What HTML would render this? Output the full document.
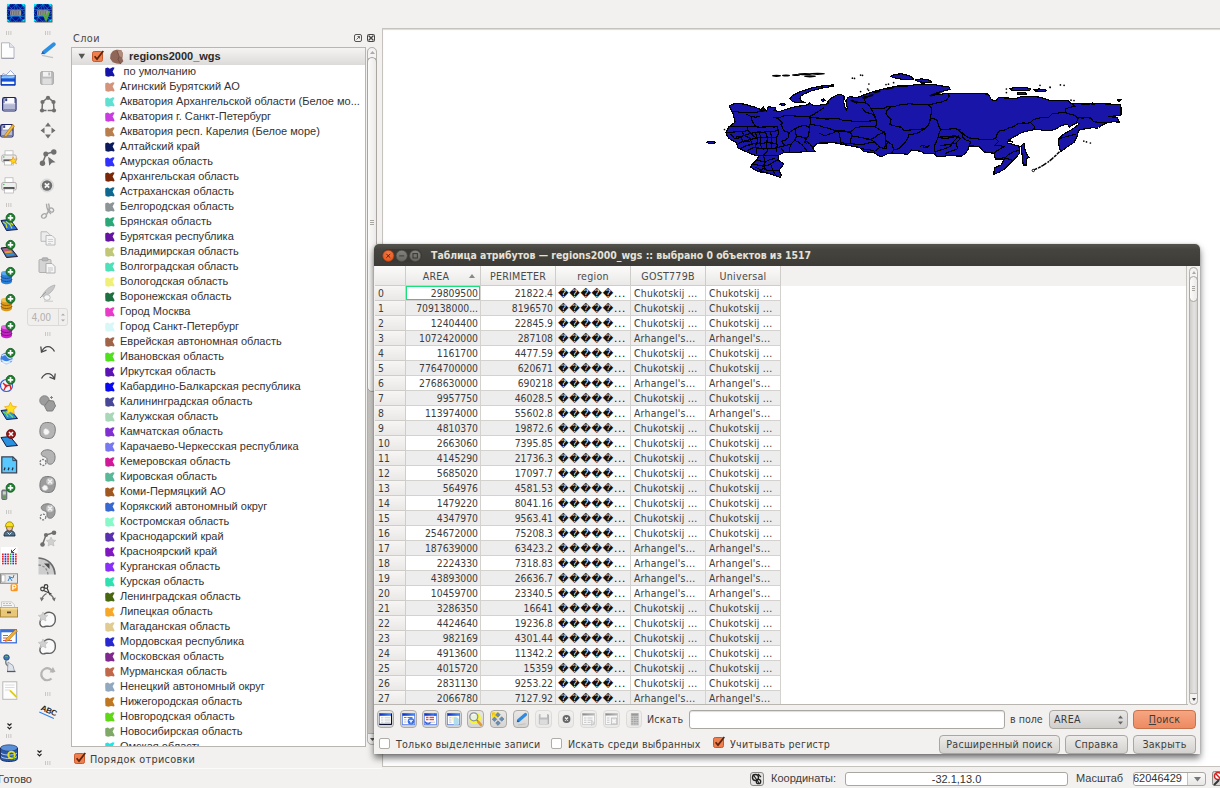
<!DOCTYPE html>
<html lang="ru"><head><meta charset="utf-8"><title>QGIS</title>
<style>
html,body{margin:0;padding:0;}
body{width:1220px;height:788px;overflow:hidden;position:relative;background:#f2f1f0;font-family:"Liberation Sans",sans-serif;font-size:11px;color:#3c3c3c;}
.a{position:absolute;}
.u{font-family:"DejaVu Sans Condensed","DejaVu Sans","Liberation Sans",sans-serif;font-size:10.600px;letter-spacing:0.220px;}
.t{position:absolute;white-space:nowrap;line-height:15px;height:15px;}
.sw{position:absolute;left:106px;width:10px;height:10px;}
.row{position:absolute;left:0;width:406px;height:15px;}
.c{position:absolute;top:0;height:14px;line-height:14px;border-right:1px solid #d4d2cf;border-bottom:1px solid #d4d2cf;white-space:nowrap;overflow:hidden;font-family:"DejaVu Sans Condensed","DejaVu Sans",sans-serif;font-size:10.300px;color:#3c3c3c;}
.r{text-align:right;}
.btn{position:absolute;border:1px solid #aaa6a0;border-radius:4px;background:linear-gradient(#edecea,#d3d2cf);text-align:center;font-family:"DejaVu Sans Condensed","DejaVu Sans",sans-serif;font-size:10.600px;letter-spacing:0.250px;color:#3c3c3c;box-sizing:border-box;}
.tb{position:absolute;width:16.500px;height:17.800px;border:1px solid #aeaba6;border-radius:4px;background:linear-gradient(#e9e8e6,#d5d4d2);box-sizing:border-box;overflow:hidden;}
.tbd{position:absolute;width:16.500px;height:17.800px;border:1px solid #dddbd8;border-radius:4px;background:linear-gradient(#f1f0ef,#eae9e7);box-sizing:border-box;overflow:hidden;}
.hd{position:absolute;width:6px;height:4px;background:repeating-linear-gradient(90deg,#c9c7c4 0,#c9c7c4 1px,transparent 1px,transparent 2.5px);}
.ic{position:absolute;overflow:visible;}
</style></head><body>
<div class="a" style="left:382px;top:28px;width:840px;height:739px;background:#fff;border:1px solid #c6c3be;box-sizing:border-box;box-shadow:inset 0 1px 1px #dcdad7;"></div>
<div class="t u" style="left:73px;top:31px;font-size:10.800px;letter-spacing:0.400px;color:#4a4a4a;">Слои</div>
<svg class="ic" style="left:354px;top:33.800px" width="24" height="10" viewBox="0 0 24 10"><rect x="0.5" y="0.5" width="7" height="7" rx="1.5" fill="none" stroke="#555" stroke-width="1"/><path d="M2.5 5.5L5.5 2.5M3.5 2.5h2v2" stroke="#555" stroke-width="0.9" fill="none"/><rect x="13.500" y="0.5" width="7" height="7" rx="1" fill="none" stroke="#444" stroke-width="1"/><path d="M14.5 1.500l5 5M19.500 1.500l-5 5" stroke="#444" stroke-width="1.300"/></svg>
<div class="a" style="left:71px;top:47px;width:295px;height:700px;background:#fff;border:1px solid #b9b6b1;box-sizing:border-box;overflow:hidden;">
<div class="a" style="left:0;top:0;width:293px;height:17px;background:linear-gradient(#f5f4f3,#dcdbd9);"></div>
<svg class="ic" style="left:6px;top:5px" width="8" height="7" viewBox="0 0 8 7"><path d="M0.500 0.800h6.500L3.750 6z" fill="#555"/></svg>
<svg class="ic" style="left:19.5px;top:2px" width="13" height="12" viewBox="0 0 13 12"><rect x="0.5" y="1.500" width="10" height="10" rx="1.800" fill="#f07f4e" stroke="#c8592b" stroke-width="1"/><path d="M2.600 6.300l2.400 2.800L11.300 1" fill="none" stroke="#5a2410" stroke-width="1.700"/></svg>
<svg class="ic" style="left:37px;top:0.500px" width="16" height="16" viewBox="0 0 15 15"><path d="M3 2.500C5 .5 9 .2 11.500 1.200L13 4 12.500 9 13.500 11.500 11 14 7 13.500 3.500 12.500 1 9 1.500 5z" fill="#8f6657"/><path d="M7.500 1.500L11.500 1.200 13 4 12.500 7.500 9.500 7z" fill="#b08a7a"/><path d="M7.500 1.500L9.500 7 8.500 10 11 14" fill="none" stroke="#6e4a3e" stroke-width="0.800"/></svg>
<div class="t" style="left:57px;top:1px;font-weight:bold;color:#2a2a2a;">regions2000_wgs</div>
<svg class="ic" style="left:33.300px;top:19px" width="10" height="10" viewBox="0 0 10 10"><path d="M0.300 1.200L2.800 0.600 4.800 1.700 7.800 0.200 9.600 0.700 7.600 4.500 9.600 8.300 9 9.600 6.200 9 3.200 9.700 0.500 9.100 0.200 5z" fill="#1414a8"/></svg><div class="t" style="left:51.5px;top:16.3px;color:#333;">по умолчанию</div>
<svg class="ic" style="left:33.300px;top:34px" width="10" height="10" viewBox="0 0 10 10"><path d="M0.300 1.200L2.800 0.600 4.800 1.700 7.800 0.200 9.600 0.700 7.600 4.500 9.600 8.300 9 9.600 6.200 9 3.200 9.700 0.500 9.100 0.200 5z" fill="#d4937a"/></svg><div class="t" style="left:48px;top:31.3px;color:#333;">Агинский Бурятский АО</div>
<svg class="ic" style="left:33.300px;top:49px" width="10" height="10" viewBox="0 0 10 10"><path d="M0.300 1.200L2.800 0.600 4.800 1.700 7.800 0.200 9.600 0.700 7.600 4.500 9.600 8.300 9 9.600 6.200 9 3.200 9.700 0.500 9.100 0.200 5z" fill="#5fe0d0"/></svg><div class="t" style="left:48px;top:46.3px;color:#333;">Акватория Архангельской области (Белое мо...</div>
<svg class="ic" style="left:33.300px;top:64px" width="10" height="10" viewBox="0 0 10 10"><path d="M0.300 1.200L2.800 0.600 4.800 1.700 7.800 0.200 9.600 0.700 7.600 4.500 9.600 8.300 9 9.600 6.200 9 3.200 9.700 0.500 9.100 0.200 5z" fill="#c83ce0"/></svg><div class="t" style="left:48px;top:61.3px;color:#333;">Акватория г. Санкт-Петербург</div>
<svg class="ic" style="left:33.300px;top:79px" width="10" height="10" viewBox="0 0 10 10"><path d="M0.300 1.200L2.800 0.600 4.800 1.700 7.800 0.200 9.600 0.700 7.600 4.500 9.600 8.300 9 9.600 6.200 9 3.200 9.700 0.500 9.100 0.200 5z" fill="#b97e4e"/></svg><div class="t" style="left:48px;top:76.3px;color:#333;">Акватория респ. Карелия (Белое море)</div>
<svg class="ic" style="left:33.300px;top:94px" width="10" height="10" viewBox="0 0 10 10"><path d="M0.300 1.200L2.800 0.600 4.800 1.700 7.800 0.200 9.600 0.700 7.600 4.500 9.600 8.300 9 9.600 6.200 9 3.200 9.700 0.500 9.100 0.200 5z" fill="#0a1a5c"/></svg><div class="t" style="left:48px;top:91.3px;color:#333;">Алтайский край</div>
<svg class="ic" style="left:33.300px;top:109px" width="10" height="10" viewBox="0 0 10 10"><path d="M0.300 1.200L2.800 0.600 4.800 1.700 7.800 0.200 9.600 0.700 7.600 4.500 9.600 8.300 9 9.600 6.200 9 3.200 9.700 0.500 9.100 0.200 5z" fill="#3030ff"/></svg><div class="t" style="left:48px;top:106.3px;color:#333;">Амурская область</div>
<svg class="ic" style="left:33.300px;top:124px" width="10" height="10" viewBox="0 0 10 10"><path d="M0.300 1.200L2.800 0.600 4.800 1.700 7.800 0.200 9.600 0.700 7.600 4.500 9.600 8.300 9 9.600 6.200 9 3.200 9.700 0.500 9.100 0.200 5z" fill="#7a2808"/></svg><div class="t" style="left:48px;top:121.3px;color:#333;">Архангельская область</div>
<svg class="ic" style="left:33.300px;top:139px" width="10" height="10" viewBox="0 0 10 10"><path d="M0.300 1.200L2.800 0.600 4.800 1.700 7.800 0.200 9.600 0.700 7.600 4.500 9.600 8.300 9 9.600 6.200 9 3.200 9.700 0.500 9.100 0.200 5z" fill="#0e6890"/></svg><div class="t" style="left:48px;top:136.3px;color:#333;">Астраханская область</div>
<svg class="ic" style="left:33.300px;top:154px" width="10" height="10" viewBox="0 0 10 10"><path d="M0.300 1.200L2.800 0.600 4.800 1.700 7.800 0.200 9.600 0.700 7.600 4.500 9.600 8.300 9 9.600 6.200 9 3.200 9.700 0.500 9.100 0.200 5z" fill="#8c9496"/></svg><div class="t" style="left:48px;top:151.3px;color:#333;">Белгородская область</div>
<svg class="ic" style="left:33.300px;top:169px" width="10" height="10" viewBox="0 0 10 10"><path d="M0.300 1.200L2.800 0.600 4.800 1.700 7.800 0.200 9.600 0.700 7.600 4.500 9.600 8.300 9 9.600 6.200 9 3.200 9.700 0.500 9.100 0.200 5z" fill="#2aa878"/></svg><div class="t" style="left:48px;top:166.3px;color:#333;">Брянская область</div>
<svg class="ic" style="left:33.300px;top:184px" width="10" height="10" viewBox="0 0 10 10"><path d="M0.300 1.200L2.800 0.600 4.800 1.700 7.800 0.200 9.600 0.700 7.600 4.500 9.600 8.300 9 9.600 6.200 9 3.200 9.700 0.500 9.100 0.200 5z" fill="#6414a0"/></svg><div class="t" style="left:48px;top:181.3px;color:#333;">Бурятская республика</div>
<svg class="ic" style="left:33.300px;top:199px" width="10" height="10" viewBox="0 0 10 10"><path d="M0.300 1.200L2.800 0.600 4.800 1.700 7.800 0.200 9.600 0.700 7.600 4.500 9.600 8.300 9 9.600 6.200 9 3.200 9.700 0.500 9.100 0.200 5z" fill="#c0c878"/></svg><div class="t" style="left:48px;top:196.3px;color:#333;">Владимирская область</div>
<svg class="ic" style="left:33.300px;top:214px" width="10" height="10" viewBox="0 0 10 10"><path d="M0.300 1.200L2.800 0.600 4.800 1.700 7.800 0.200 9.600 0.700 7.600 4.500 9.600 8.300 9 9.600 6.200 9 3.200 9.700 0.500 9.100 0.200 5z" fill="#50e0b8"/></svg><div class="t" style="left:48px;top:211.3px;color:#333;">Волгоградская область</div>
<svg class="ic" style="left:33.300px;top:229px" width="10" height="10" viewBox="0 0 10 10"><path d="M0.300 1.200L2.800 0.600 4.800 1.700 7.800 0.200 9.600 0.700 7.600 4.500 9.600 8.300 9 9.600 6.200 9 3.200 9.700 0.500 9.100 0.200 5z" fill="#f0f078"/></svg><div class="t" style="left:48px;top:226.3px;color:#333;">Вологодская область</div>
<svg class="ic" style="left:33.300px;top:244px" width="10" height="10" viewBox="0 0 10 10"><path d="M0.300 1.200L2.800 0.600 4.800 1.700 7.800 0.200 9.600 0.700 7.600 4.500 9.600 8.300 9 9.600 6.200 9 3.200 9.700 0.500 9.100 0.200 5z" fill="#1e7040"/></svg><div class="t" style="left:48px;top:241.3px;color:#333;">Воронежская область</div>
<svg class="ic" style="left:33.300px;top:259px" width="10" height="10" viewBox="0 0 10 10"><path d="M0.300 1.200L2.800 0.600 4.800 1.700 7.800 0.200 9.600 0.700 7.600 4.500 9.600 8.300 9 9.600 6.200 9 3.200 9.700 0.500 9.100 0.200 5z" fill="#e83cc8"/></svg><div class="t" style="left:48px;top:256.3px;color:#333;">Город Москва</div>
<svg class="ic" style="left:33.300px;top:274px" width="10" height="10" viewBox="0 0 10 10"><path d="M0.300 1.200L2.800 0.600 4.800 1.700 7.800 0.200 9.600 0.700 7.600 4.500 9.600 8.300 9 9.600 6.200 9 3.200 9.700 0.500 9.100 0.200 5z" fill="#d8f8f8"/></svg><div class="t" style="left:48px;top:271.3px;color:#333;">Город Санкт-Петербург</div>
<svg class="ic" style="left:33.300px;top:289px" width="10" height="10" viewBox="0 0 10 10"><path d="M0.300 1.200L2.800 0.600 4.800 1.700 7.800 0.200 9.600 0.700 7.600 4.500 9.600 8.300 9 9.600 6.200 9 3.200 9.700 0.500 9.100 0.200 5z" fill="#a06448"/></svg><div class="t" style="left:48px;top:286.3px;color:#333;">Еврейская автономная область</div>
<svg class="ic" style="left:33.300px;top:304px" width="10" height="10" viewBox="0 0 10 10"><path d="M0.300 1.200L2.800 0.600 4.800 1.700 7.800 0.200 9.600 0.700 7.600 4.500 9.600 8.300 9 9.600 6.200 9 3.200 9.700 0.500 9.100 0.200 5z" fill="#50e020"/></svg><div class="t" style="left:48px;top:301.3px;color:#333;">Ивановская область</div>
<svg class="ic" style="left:33.300px;top:319px" width="10" height="10" viewBox="0 0 10 10"><path d="M0.300 1.200L2.800 0.600 4.800 1.700 7.800 0.200 9.600 0.700 7.600 4.500 9.600 8.300 9 9.600 6.200 9 3.200 9.700 0.500 9.100 0.200 5z" fill="#5a14b4"/></svg><div class="t" style="left:48px;top:316.3px;color:#333;">Иркутская область</div>
<svg class="ic" style="left:33.300px;top:334px" width="10" height="10" viewBox="0 0 10 10"><path d="M0.300 1.200L2.800 0.600 4.800 1.700 7.800 0.200 9.600 0.700 7.600 4.500 9.600 8.300 9 9.600 6.200 9 3.200 9.700 0.500 9.100 0.200 5z" fill="#0a0af0"/></svg><div class="t" style="left:48px;top:331.3px;color:#333;">Кабардино-Балкарская республика</div>
<svg class="ic" style="left:33.300px;top:349px" width="10" height="10" viewBox="0 0 10 10"><path d="M0.300 1.200L2.800 0.600 4.800 1.700 7.800 0.200 9.600 0.700 7.600 4.500 9.600 8.300 9 9.600 6.200 9 3.200 9.700 0.500 9.100 0.200 5z" fill="#484898"/></svg><div class="t" style="left:48px;top:346.3px;color:#333;">Калининградская область</div>
<svg class="ic" style="left:33.300px;top:364px" width="10" height="10" viewBox="0 0 10 10"><path d="M0.300 1.200L2.800 0.600 4.800 1.700 7.800 0.200 9.600 0.700 7.600 4.500 9.600 8.300 9 9.600 6.200 9 3.200 9.700 0.500 9.100 0.200 5z" fill="#a8d8b8"/></svg><div class="t" style="left:48px;top:361.3px;color:#333;">Калужская область</div>
<svg class="ic" style="left:33.300px;top:379px" width="10" height="10" viewBox="0 0 10 10"><path d="M0.300 1.200L2.800 0.600 4.800 1.700 7.800 0.200 9.600 0.700 7.600 4.500 9.600 8.300 9 9.600 6.200 9 3.200 9.700 0.500 9.100 0.200 5z" fill="#8030d0"/></svg><div class="t" style="left:48px;top:376.3px;color:#333;">Камчатская область</div>
<svg class="ic" style="left:33.300px;top:394px" width="10" height="10" viewBox="0 0 10 10"><path d="M0.300 1.200L2.800 0.600 4.800 1.700 7.800 0.200 9.600 0.700 7.600 4.500 9.600 8.300 9 9.600 6.200 9 3.200 9.700 0.500 9.100 0.200 5z" fill="#7878f0"/></svg><div class="t" style="left:48px;top:391.3px;color:#333;">Карачаево-Черкесская республика</div>
<svg class="ic" style="left:33.300px;top:409px" width="10" height="10" viewBox="0 0 10 10"><path d="M0.300 1.200L2.800 0.600 4.800 1.700 7.800 0.200 9.600 0.700 7.600 4.500 9.600 8.300 9 9.600 6.200 9 3.200 9.700 0.500 9.100 0.200 5z" fill="#d01898"/></svg><div class="t" style="left:48px;top:406.3px;color:#333;">Кемеровская область</div>
<svg class="ic" style="left:33.300px;top:424px" width="10" height="10" viewBox="0 0 10 10"><path d="M0.300 1.200L2.800 0.600 4.800 1.700 7.800 0.200 9.600 0.700 7.600 4.500 9.600 8.300 9 9.600 6.200 9 3.200 9.700 0.500 9.100 0.200 5z" fill="#58b898"/></svg><div class="t" style="left:48px;top:421.3px;color:#333;">Кировская область</div>
<svg class="ic" style="left:33.300px;top:439px" width="10" height="10" viewBox="0 0 10 10"><path d="M0.300 1.200L2.800 0.600 4.800 1.700 7.800 0.200 9.600 0.700 7.600 4.500 9.600 8.300 9 9.600 6.200 9 3.200 9.700 0.500 9.100 0.200 5z" fill="#a05820"/></svg><div class="t" style="left:48px;top:436.3px;color:#333;">Коми-Пермяцкий АО</div>
<svg class="ic" style="left:33.300px;top:454px" width="10" height="10" viewBox="0 0 10 10"><path d="M0.300 1.200L2.800 0.600 4.800 1.700 7.800 0.200 9.600 0.700 7.600 4.500 9.600 8.300 9 9.600 6.200 9 3.200 9.700 0.500 9.100 0.200 5z" fill="#3868d0"/></svg><div class="t" style="left:48px;top:451.3px;color:#333;">Корякский автономный округ</div>
<svg class="ic" style="left:33.300px;top:469px" width="10" height="10" viewBox="0 0 10 10"><path d="M0.300 1.200L2.800 0.600 4.800 1.700 7.800 0.200 9.600 0.700 7.600 4.500 9.600 8.300 9 9.600 6.200 9 3.200 9.700 0.500 9.100 0.200 5z" fill="#88f8c8"/></svg><div class="t" style="left:48px;top:466.3px;color:#333;">Костромская область</div>
<svg class="ic" style="left:33.300px;top:484px" width="10" height="10" viewBox="0 0 10 10"><path d="M0.300 1.200L2.800 0.600 4.800 1.700 7.800 0.200 9.600 0.700 7.600 4.500 9.600 8.300 9 9.600 6.200 9 3.200 9.700 0.500 9.100 0.200 5z" fill="#5830b0"/></svg><div class="t" style="left:48px;top:481.3px;color:#333;">Краснодарский край</div>
<svg class="ic" style="left:33.300px;top:499px" width="10" height="10" viewBox="0 0 10 10"><path d="M0.300 1.200L2.800 0.600 4.800 1.700 7.800 0.200 9.600 0.700 7.600 4.500 9.600 8.300 9 9.600 6.200 9 3.200 9.700 0.500 9.100 0.200 5z" fill="#8018c0"/></svg><div class="t" style="left:48px;top:496.3px;color:#333;">Красноярский край</div>
<svg class="ic" style="left:33.300px;top:514px" width="10" height="10" viewBox="0 0 10 10"><path d="M0.300 1.200L2.800 0.600 4.800 1.700 7.800 0.200 9.600 0.700 7.600 4.500 9.600 8.300 9 9.600 6.200 9 3.200 9.700 0.500 9.100 0.200 5z" fill="#8830f8"/></svg><div class="t" style="left:48px;top:511.3px;color:#333;">Курганская область</div>
<svg class="ic" style="left:33.300px;top:529px" width="10" height="10" viewBox="0 0 10 10"><path d="M0.300 1.200L2.800 0.600 4.800 1.700 7.800 0.200 9.600 0.700 7.600 4.500 9.600 8.300 9 9.600 6.200 9 3.200 9.700 0.500 9.100 0.200 5z" fill="#30e0b0"/></svg><div class="t" style="left:48px;top:526.3px;color:#333;">Курская область</div>
<svg class="ic" style="left:33.300px;top:544px" width="10" height="10" viewBox="0 0 10 10"><path d="M0.300 1.200L2.800 0.600 4.800 1.700 7.800 0.200 9.600 0.700 7.600 4.500 9.600 8.300 9 9.600 6.200 9 3.200 9.700 0.500 9.100 0.200 5z" fill="#486810"/></svg><div class="t" style="left:48px;top:541.3px;color:#333;">Ленинградская область</div>
<svg class="ic" style="left:33.300px;top:559px" width="10" height="10" viewBox="0 0 10 10"><path d="M0.300 1.200L2.800 0.600 4.800 1.700 7.800 0.200 9.600 0.700 7.600 4.500 9.600 8.300 9 9.600 6.200 9 3.200 9.700 0.500 9.100 0.200 5z" fill="#f8a828"/></svg><div class="t" style="left:48px;top:556.3px;color:#333;">Липецкая область</div>
<svg class="ic" style="left:33.300px;top:574px" width="10" height="10" viewBox="0 0 10 10"><path d="M0.300 1.200L2.800 0.600 4.800 1.700 7.800 0.200 9.600 0.700 7.600 4.500 9.600 8.300 9 9.600 6.200 9 3.200 9.700 0.500 9.100 0.200 5z" fill="#e0cc90"/></svg><div class="t" style="left:48px;top:571.3px;color:#333;">Магаданская область</div>
<svg class="ic" style="left:33.300px;top:589px" width="10" height="10" viewBox="0 0 10 10"><path d="M0.300 1.200L2.800 0.600 4.800 1.700 7.800 0.200 9.600 0.700 7.600 4.500 9.600 8.300 9 9.600 6.200 9 3.200 9.700 0.500 9.100 0.200 5z" fill="#2828d0"/></svg><div class="t" style="left:48px;top:586.3px;color:#333;">Мордовская республика</div>
<svg class="ic" style="left:33.300px;top:604px" width="10" height="10" viewBox="0 0 10 10"><path d="M0.300 1.200L2.800 0.600 4.800 1.700 7.800 0.200 9.600 0.700 7.600 4.500 9.600 8.300 9 9.600 6.200 9 3.200 9.700 0.500 9.100 0.200 5z" fill="#802890"/></svg><div class="t" style="left:48px;top:601.3px;color:#333;">Московская область</div>
<svg class="ic" style="left:33.300px;top:619px" width="10" height="10" viewBox="0 0 10 10"><path d="M0.300 1.200L2.800 0.600 4.800 1.700 7.800 0.200 9.600 0.700 7.600 4.500 9.600 8.300 9 9.600 6.200 9 3.200 9.700 0.500 9.100 0.200 5z" fill="#c06848"/></svg><div class="t" style="left:48px;top:616.3px;color:#333;">Мурманская область</div>
<svg class="ic" style="left:33.300px;top:634px" width="10" height="10" viewBox="0 0 10 10"><path d="M0.300 1.200L2.800 0.600 4.800 1.700 7.800 0.200 9.600 0.700 7.600 4.500 9.600 8.300 9 9.600 6.200 9 3.200 9.700 0.500 9.100 0.200 5z" fill="#90a8c0"/></svg><div class="t" style="left:48px;top:631.3px;color:#333;">Ненецкий автономный округ</div>
<svg class="ic" style="left:33.300px;top:649px" width="10" height="10" viewBox="0 0 10 10"><path d="M0.300 1.200L2.800 0.600 4.800 1.700 7.800 0.200 9.600 0.700 7.600 4.500 9.600 8.300 9 9.600 6.200 9 3.200 9.700 0.500 9.100 0.200 5z" fill="#c07820"/></svg><div class="t" style="left:48px;top:646.3px;color:#333;">Нижегородская область</div>
<svg class="ic" style="left:33.300px;top:664px" width="10" height="10" viewBox="0 0 10 10"><path d="M0.300 1.200L2.800 0.600 4.800 1.700 7.800 0.200 9.600 0.700 7.600 4.500 9.600 8.300 9 9.600 6.200 9 3.200 9.700 0.500 9.100 0.200 5z" fill="#60d818"/></svg><div class="t" style="left:48px;top:661.3px;color:#333;">Новгородская область</div>
<svg class="ic" style="left:33.300px;top:679px" width="10" height="10" viewBox="0 0 10 10"><path d="M0.300 1.200L2.800 0.600 4.800 1.700 7.800 0.200 9.600 0.700 7.600 4.500 9.600 8.300 9 9.600 6.200 9 3.200 9.700 0.500 9.100 0.200 5z" fill="#80a868"/></svg><div class="t" style="left:48px;top:676.3px;color:#333;">Новосибирская область</div>
<svg class="ic" style="left:33.300px;top:694px" width="10" height="10" viewBox="0 0 10 10"><path d="M0.300 1.200L2.800 0.600 4.800 1.700 7.800 0.200 9.600 0.700 7.600 4.500 9.600 8.300 9 9.600 6.200 9 3.200 9.700 0.500 9.100 0.200 5z" fill="#18e8e8"/></svg><div class="t" style="left:48px;top:691.3px;color:#333;">Омская область</div>
</div>
<div class="a" style="left:367px;top:47px;width:10px;height:698px;border-radius:5px;background:linear-gradient(90deg,#c4c2be,#dddcda 60%,#d2d0cd);border:1px solid #b5b2ad;box-sizing:border-box;"></div>
<div class="a" style="left:367px;top:47px;width:10px;height:12px;border-radius:5px 5px 0 0;background:#f4f3f2;border:1px solid #b5b2ad;box-sizing:border-box;"></div>
<svg class="ic" style="left:370px;top:51px" width="5" height="3" viewBox="0 0 5 3"><path d="M0 3L2.500 0 5 3z" fill="#aaa"/></svg>
<div class="a" style="left:367px;top:57px;width:10px;height:335px;border-radius:5px;background:linear-gradient(90deg,#fbfbfa,#eceae8);border:1px solid #a9a6a1;box-sizing:border-box;"></div>
<div class="a" style="left:370px;top:220px;width:4px;height:5px;background:repeating-linear-gradient(#a9a6a1 0,#a9a6a1 1px,transparent 1px,transparent 2px);"></div>
<div class="a" style="left:367px;top:733px;width:10px;height:12px;border-radius:0 0 5px 5px;background:#f4f3f2;border:1px solid #b5b2ad;box-sizing:border-box;"></div>
<svg class="ic" style="left:370px;top:738px" width="5" height="3" viewBox="0 0 5 3"><path d="M0 0L2.500 3 5 0z" fill="#555"/></svg>
<svg class="ic" style="left:74px;top:752px" width="13" height="12" viewBox="0 0 13 12"><rect x="0.5" y="1.500" width="10" height="10" rx="1.800" fill="#f07f4e" stroke="#c8592b" stroke-width="1"/><path d="M2.600 6.300l2.400 2.800L11.300 1" fill="none" stroke="#5a2410" stroke-width="1.700"/></svg>
<div class="t u" style="left:90px;top:752px;font-size:10.800px;letter-spacing:0.300px;color:#3c3c3c;">Порядок отрисовки</div>
<div class="a" style="left:0;top:768px;width:382px;height:1px;background:#fbfbfa;"></div>
<div class="t" style="left:-2px;top:772px;color:#3c3c3c;">Готово</div>
<svg class="ic" style="left:750px;top:772px" width="14" height="14" viewBox="0 0 14 14"><rect x="0.5" y="0.5" width="13" height="13" rx="2.500" fill="#e4e3e1" stroke="#8a8885"/><circle cx="5.500" cy="5.500" r="3" fill="none" stroke="#222" stroke-width="1.400"/><circle cx="8.500" cy="9.500" r="2.200" fill="none" stroke="#222" stroke-width="1.300"/><path d="M3 2.500L9 11M8 2l3 3" stroke="#222" stroke-width="1.200"/></svg>
<div class="t" style="left:771px;top:771px;">Координаты:</div>
<div class="a" style="left:845px;top:772px;width:223px;height:14px;border:1px solid #aaa7a2;border-radius:3px;background:#fff;box-sizing:border-box;text-align:center;line-height:13px;font-size:11px;color:#333;">-32.1,13.0</div>
<div class="t" style="left:1076px;top:771px;">Масштаб</div>
<div class="a" style="left:1133px;top:772px;width:73px;height:14px;border:1px solid #aaa7a2;border-radius:3px;background:linear-gradient(#fafafa,#e8e7e5);box-sizing:border-box;overflow:hidden;"><div class="a" style="left:0;top:0;width:53px;height:12px;background:#fff;border-right:1px solid #c5c2bd;overflow:hidden;"><div class="t" style="left:-1px;top:-2px;color:#333;">62046429</div></div><svg class="ic" style="left:60px;top:4px" width="7" height="5" viewBox="0 0 7 5"><path d="M0 0h7L3.500 4.500z" fill="#777"/></svg></div>
<svg class="ic" style="left:1212px;top:771px" width="10" height="15" viewBox="0 0 10 15"><rect x="0.5" y="0.5" width="12" height="14" rx="2" fill="#d8d7d5" stroke="#8a8885"/><circle cx="6" cy="5" r="3.500" fill="#fff" stroke="#d02020" stroke-width="1.500"/><path d="M3.500 2.500l5 5" stroke="#d02020" stroke-width="1.500"/><path d="M2 14l5-5" stroke="#333" stroke-width="2"/></svg>
<svg class="ic" style="left:7px;top:4px" width="18.5" height="18.5" viewBox="0 0 18.5 18.5"><rect x="0.800" y="0.800" width="17.600" height="17.600" fill="#101010" opacity="0.800"/><rect x="0" y="0" width="17.600" height="17.600" fill="#00108c"/><path d="M0 0L17.600 17.600M17.600 0L0 17.600M8.800 0L0 8.800 8.800 17.600 17.600 8.800zM8.800 0L3 17.600M8.800 0l5.800 17.600M0 5.500h17.600M0 12.500h17.600M3 0L0 5M14.600 0l3 5" stroke="#1890e0" stroke-width="0.700" fill="none" opacity="0.850"/><path d="M0 0h3.200L0 3.200zM17.600 0h-3.200l3.200 3.200zM0 17.600h3.200L0 14.400zM17.600 17.600h-3.200l3.200-3.200z" fill="#00f4ff"/><rect x="0.300" y="0.300" width="17" height="17" fill="none" stroke="#10b0e0" stroke-width="0.600" stroke-dasharray="1 1"/><rect x="3.200" y="6.200" width="11" height="5.600" fill="#989898"/><path d="M4.500 7.500v3M6.300 7.500v3M8.100 7.500v3M9.900 7.500v3M11.700 7.500v3" stroke="#404040" stroke-width="0.900"/><path d="M3.200 9h11" stroke="#b8b8b8" stroke-width="0.600"/></svg>
<svg class="ic" style="left:34.2px;top:4px" width="18.5" height="18.5" viewBox="0 0 18.5 18.5"><rect x="0.800" y="0.800" width="17.600" height="17.600" fill="#101010" opacity="0.800"/><rect x="0" y="0" width="17.600" height="17.600" fill="#00108c"/><path d="M0 0L17.600 17.600M17.600 0L0 17.600M8.800 0L0 8.800 8.800 17.600 17.600 8.800zM8.800 0L3 17.600M8.800 0l5.800 17.600M0 5.500h17.600M0 12.500h17.600M3 0L0 5M14.600 0l3 5" stroke="#1890e0" stroke-width="0.700" fill="none" opacity="0.850"/><path d="M0 0h3.200L0 3.200zM17.600 0h-3.200l3.200 3.200zM0 17.600h3.200L0 14.400zM17.600 17.600h-3.200l3.200-3.200z" fill="#00f4ff"/><rect x="0.300" y="0.300" width="17" height="17" fill="none" stroke="#10b0e0" stroke-width="0.600" stroke-dasharray="1 1"/><rect x="3.200" y="6.200" width="11" height="5.600" fill="#989898"/><path d="M4.500 7.500v3M6.300 7.500v3M8.100 7.500v3M9.900 7.500v3M11.700 7.500v3" stroke="#404040" stroke-width="0.900"/><path d="M3.200 9h11" stroke="#b8b8b8" stroke-width="0.600"/><path d="M9 9l3 6.500 3.300-8.500" fill="none" stroke="#58a840" stroke-width="2.200"/></svg>
<svg class="ic" style="left:6px;top:31px" width="6" height="4" viewBox="0 0 6 4"><path d="M0.500 0v4M2.700 0v4M4.900 0v4" stroke="#c4c2bf" stroke-width="0.900"/></svg>
<svg class="ic" style="left:45px;top:31px" width="6" height="4" viewBox="0 0 6 4"><path d="M0.500 0v4M2.700 0v4M4.900 0v4" stroke="#c4c2bf" stroke-width="0.900"/></svg>
<svg class="ic" style="left:0px;top:42px" width="15" height="17" viewBox="0 0 15 17"><path d="M1.500 0.800h8l4.500 4.500v11h-12.500z" fill="#fdfdfd" stroke="#b4b4c0" stroke-width="1"/><path d="M9.500 0.800v4.500h4.500" fill="#e4e4ec" stroke="#b4b4c0" stroke-width="0.800"/><path d="M1.500 16.300h12.500" stroke="#9a9aa8" stroke-width="1"/></svg>
<svg class="ic" style="left:0px;top:69px" width="16" height="17" viewBox="0 0 16 17"><path d="M2 7l1-2.500 3 1.500L10.500 1.500 14 5l.5 2z" fill="#fdfdff" stroke="#7a90c8" stroke-width="0.700"/><rect x="1" y="6" width="14.200" height="10.200" fill="#1a50d0"/><rect x="1" y="6" width="14.200" height="3.500" fill="#5aa4f4"/><path d="M1 8.800c4-2.300 9 1 14.200-1.800" stroke="#b4d8fa" stroke-width="1.100" fill="none"/><rect x="1.800" y="12.600" width="12.600" height="2.400" fill="#f4f8ff"/><path d="M1 6v10.200h14.200V6" fill="none" stroke="#0a2a9a" stroke-width="0.900"/></svg>
<svg class="ic" style="left:2px;top:97px" width="15" height="15" viewBox="0 0 15 15"><rect x="0.700" y="0.700" width="13.300" height="13.300" rx="1.500" fill="#a4a8c8" stroke="#1a2064" stroke-width="1.200"/><rect x="3" y="1" width="9" height="5" fill="#fafaff"/><rect x="3.200" y="1.300" width="2" height="2.800" fill="#3a4480"/><rect x="1.500" y="6.200" width="11.800" height="1.200" fill="#f0f0fa"/><rect x="1.500" y="7.600" width="11.800" height="5.800" fill="#b4b8d4"/><path d="M1.500 12.700h11.800" stroke="#7c82a8" stroke-width="1.200"/></svg>
<svg class="ic" style="left:0px;top:123px" width="16" height="15" viewBox="0 0 16 15"><rect x="0.700" y="1.700" width="12.300" height="12.300" rx="1.500" fill="#a4a8c8" stroke="#1a2064" stroke-width="1.200"/><rect x="3" y="2" width="8" height="4.500" fill="#fafaff"/><rect x="3.200" y="2.300" width="2" height="2.600" fill="#3a4480"/><rect x="1.500" y="8" width="10.800" height="5.400" fill="#b4b8d4"/><path d="M1.500 12.800h10.800" stroke="#6c7298" stroke-width="1.200"/><path d="M5 11.500L12.500 1.500l2 1.500L7 13l-2.800 1z" fill="#f0b838" stroke="#a06810" stroke-width="0.600"/></svg>
<svg class="ic" style="left:1px;top:150px" width="17" height="17" viewBox="0 0 17 17"><rect x="4" y="0.800" width="8" height="5" fill="#fff" stroke="#b0b0b0" stroke-width="0.700"/><rect x="0.800" y="5" width="14.500" height="7" rx="1.500" fill="#eeeeee" stroke="#a8a8a8" stroke-width="0.900"/><rect x="2.500" y="9.500" width="11" height="1.800" fill="#333"/><rect x="3.500" y="11" width="9" height="4" fill="#fff" stroke="#b0b0b0" stroke-width="0.700"/><circle cx="2.800" cy="7" r="0.800" fill="#40c040"/><path d="M12 6.500l1.300 2.800 3-.4-2.200 2.100 1.500 2.800-2.900-1.400-2.300 2.200.5-3.100-2.700-1.500 3-.5z" fill="#ffd820" stroke="#e89010" stroke-width="0.600"/></svg>
<svg class="ic" style="left:1px;top:177px" width="16" height="17" viewBox="0 0 16 17"><rect x="4" y="0.800" width="8" height="5.500" fill="#fff" stroke="#b0b0b0" stroke-width="0.700"/><rect x="0.800" y="5.500" width="14.500" height="7.500" rx="1.500" fill="#eeeeee" stroke="#a8a8a8" stroke-width="0.900"/><rect x="2.500" y="10.200" width="11" height="1.800" fill="#333"/><rect x="3.500" y="12" width="9" height="4" fill="#fff" stroke="#b0b0b0" stroke-width="0.700"/><circle cx="2.800" cy="7.500" r="0.800" fill="#40c040"/></svg>
<svg class="ic" style="left:6px;top:202.5px" width="6" height="4" viewBox="0 0 6 4"><path d="M0.500 0v4M2.700 0v4M4.900 0v4" stroke="#c4c2bf" stroke-width="0.900"/></svg>
<svg class="ic" style="left:0px;top:213px" width="18" height="18" viewBox="0 0 18 18"><path d="M1 7.500l9-1 7.500 10-11 1z" fill="#2a70d8" stroke="#101840" stroke-width="1"/><path d="M3 9l3 2 1 4M6 8.500l4 3 2 4M9 8l4 4" stroke="#c8e030" stroke-width="1.200" fill="none"/><circle cx="10.5" cy="4.8" r="4.400" fill="#1f8030" stroke="#0f5a1e" stroke-width="0.900"/><path d="M7.8 4.8h5.400M10.5 2.1v5.400" stroke="#fff" stroke-width="1.700"/></svg>
<svg class="ic" style="left:0px;top:240px" width="18" height="18" viewBox="0 0 18 18"><path d="M1 8l9-1 7.500 9.500-11 1z" fill="#606878" stroke="#101840" stroke-width="1"/><path d="M2.500 9l7-.8 1.600 2-7 .9z" fill="#e05080"/><path d="M4 11.500l7-.9 1.600 2-7 .9z" fill="#e8a030"/><path d="M6 14l7-.9 1.600 2-7 .9z" fill="#3090e0"/><circle cx="10.5" cy="4.8" r="4.400" fill="#1f8030" stroke="#0f5a1e" stroke-width="0.900"/><path d="M7.8 4.8h5.400M10.5 2.1v5.400" stroke="#fff" stroke-width="1.700"/></svg>
<svg class="ic" style="left:0px;top:267px" width="17" height="18" viewBox="0 0 17 18"><path d="M1 6v8.500c0 1.600 2.800 2.700 5.500 2.700s5.500-1.100 5.500-2.700V6z" fill="#2a7fd8"/><ellipse cx="6.500" cy="6" rx="5.500" ry="2.300" fill="#5aa8f0"/><path d="M1 9c0 1.600 2.800 2.500 5.500 2.500S12 10.600 12 9M1 12c0 1.600 2.800 2.500 5.500 2.500s5.500-.9 5.500-2.500" fill="none" stroke="#1a4fa0" stroke-width="1"/><circle cx="10.5" cy="4.8" r="4.400" fill="#1f8030" stroke="#0f5a1e" stroke-width="0.900"/><path d="M7.8 4.8h5.400M10.5 2.1v5.400" stroke="#fff" stroke-width="1.700"/></svg>
<svg class="ic" style="left:0px;top:294px" width="17" height="18" viewBox="0 0 17 18"><path d="M1 6v8.500c0 1.600 2.800 2.700 5.500 2.700s5.500-1.100 5.500-2.700V6z" fill="#dc9a18"/><ellipse cx="6.500" cy="6" rx="5.500" ry="2.300" fill="#f0c050"/><path d="M1 9c0 1.600 2.800 2.500 5.500 2.500S12 10.600 12 9M1 12c0 1.600 2.800 2.500 5.500 2.500s5.500-.9 5.500-2.500" fill="none" stroke="#8a5a08" stroke-width="1"/><circle cx="10.5" cy="4.8" r="4.400" fill="#1f8030" stroke="#0f5a1e" stroke-width="0.900"/><path d="M7.8 4.8h5.400M10.5 2.1v5.400" stroke="#fff" stroke-width="1.700"/></svg>
<svg class="ic" style="left:0px;top:321px" width="17" height="18" viewBox="0 0 17 18"><path d="M1 6v8.500c0 1.600 2.800 2.700 5.500 2.700s5.500-1.100 5.500-2.700V6z" fill="#c820c8"/><ellipse cx="6.500" cy="6" rx="5.500" ry="2.300" fill="#e868e8"/><path d="M1 9c0 1.600 2.800 2.500 5.500 2.500S12 10.600 12 9M1 12c0 1.600 2.800 2.500 5.500 2.500s5.500-.9 5.500-2.500" fill="none" stroke="#801080" stroke-width="1"/><circle cx="10.5" cy="4.8" r="4.400" fill="#1f8030" stroke="#0f5a1e" stroke-width="0.900"/><path d="M7.8 4.8h5.400M10.5 2.1v5.400" stroke="#fff" stroke-width="1.700"/></svg>
<svg class="ic" style="left:0px;top:348px" width="17" height="18" viewBox="0 0 17 18"><circle cx="6.500" cy="10.500" r="6" fill="#3a80e0"/><path d="M2 8c2-2 4-2 5 0s3 3 5 1M1.500 12c2 1 3 3 6 2s3-2 5-2" stroke="#e8f0ff" stroke-width="1.600" fill="none" opacity="0.850"/><ellipse cx="6" cy="15" rx="5" ry="1.800" fill="#fff" opacity="0.700"/><circle cx="10.5" cy="4.8" r="4.400" fill="#1f8030" stroke="#0f5a1e" stroke-width="0.900"/><path d="M7.8 4.8h5.400M10.5 2.1v5.400" stroke="#fff" stroke-width="1.700"/></svg>
<svg class="ic" style="left:0px;top:375px" width="17" height="18" viewBox="0 0 17 18"><circle cx="6.500" cy="10.500" r="6" fill="#f4f4ff" stroke="#3a60d0" stroke-width="1.200"/><path d="M3 8l3 3-2 4M6 11l4-1M10 10l1 4" stroke="#e02020" stroke-width="1.400" fill="none"/><circle cx="6" cy="11" r="1.400" fill="#e02020"/><circle cx="10.5" cy="4.8" r="4.400" fill="#1f8030" stroke="#0f5a1e" stroke-width="0.900"/><path d="M7.8 4.8h5.400M10.5 2.1v5.400" stroke="#fff" stroke-width="1.700"/></svg>
<svg class="ic" style="left:0px;top:402px" width="18" height="18" viewBox="0 0 18 18"><path d="M1 8.500l9-1 7.500 9-11 1z" fill="#2a90e0" stroke="#101840" stroke-width="1"/><path d="M3 10l3 1.500 2 3.500M6 9.500l4 3 3 3" stroke="#70e060" stroke-width="1.300" fill="none"/><path d="M10.500 0.300l1.900 3.800 4.200.6-3 3 .7 4.200-3.800-2-3.700 2 .7-4.200-3-3 4.200-.6z" fill="#ffe020" stroke="#f0a010" stroke-width="0.700"/></svg>
<svg class="ic" style="left:0px;top:429px" width="18" height="18" viewBox="0 0 18 18"><path d="M1 8.500l9-1 7.500 9-11 1z" fill="#2a90e0" stroke="#101840" stroke-width="1"/><circle cx="11" cy="5" r="4.500" fill="#9a1818" stroke="#5a0808" stroke-width="0.800"/><path d="M9 3l4 4M13 3l-4 4" stroke="#fff" stroke-width="1.500"/></svg>
<svg class="ic" style="left:1px;top:456px" width="17" height="18" viewBox="0 0 17 18"><path d="M0.800 0.800h11l3.800 3.800v12.200h-14.800z" fill="#58c8ff" stroke="#3a4454" stroke-width="1.300"/><path d="M11.800 0.800v3.800h3.800" fill="none" stroke="#3a4454" stroke-width="1"/><path d="M4 11.500l-.8 2.800M8 11.500l-.8 2.800M12 11.500l-.8 2.800" stroke="#2a3444" stroke-width="1.300"/></svg>
<svg class="ic" style="left:1px;top:483px" width="16" height="18" viewBox="0 0 16 18"><rect x="0.800" y="7" width="5" height="9.500" rx="1" fill="#8a9098" stroke="#4a5058" stroke-width="0.800"/><rect x="1.800" y="8.500" width="3" height="3" fill="#c8d8c0"/><rect x="1.800" y="13" width="3" height="2.500" fill="#60a050"/><circle cx="9.5" cy="4.8" r="4.400" fill="#1f8030" stroke="#0f5a1e" stroke-width="0.900"/><path d="M6.8 4.8h5.400M9.5 2.1v5.400" stroke="#fff" stroke-width="1.700"/></svg>
<svg class="ic" style="left:6px;top:510px" width="6" height="4" viewBox="0 0 6 4"><path d="M0.500 0v4M2.700 0v4M4.900 0v4" stroke="#c4c2bf" stroke-width="0.900"/></svg>
<svg class="ic" style="left:3px;top:521px" width="13" height="16" viewBox="0 0 13 16"><path d="M1 15c0-4 2-5.500 5.500-5.500S12 11 12 15z" fill="#50708a" stroke="#1a2a3a" stroke-width="0.900"/><circle cx="6.500" cy="7" r="3" fill="#f0c0a0" stroke="#3a2a1a" stroke-width="0.700"/><path d="M2.500 5.500C2.500 2.500 4 0.800 6.500 0.800S10.500 2.500 10.500 5.500z" fill="#f8e020" stroke="#8a7a00" stroke-width="0.800"/><path d="M1.800 5.700h9.400" stroke="#c8b000" stroke-width="1.100"/><path d="M4.500 11.500l2 2 2-2" stroke="#e8e8e8" stroke-width="1" fill="none"/></svg>
<svg class="ic" style="left:0.5px;top:546.5px" width="16.5" height="18" viewBox="0 0 16.5 18"><rect x="0" y="0" width="16.500" height="18" fill="#fff"/><rect x="1" y="6.5" width="1.700" height="1.700" fill="#e02020"/><rect x="1" y="8.8" width="1.700" height="1.700" fill="#e02020"/><rect x="1" y="11.1" width="1.700" height="1.700" fill="#e02020"/><rect x="1" y="13.4" width="1.700" height="1.700" fill="#e02020"/><rect x="1" y="15.7" width="1.700" height="1.700" fill="#e02020"/><rect x="3.6" y="6.5" width="1.700" height="1.700" fill="#2030e0"/><rect x="3.6" y="8.8" width="1.700" height="1.700" fill="#2030e0"/><rect x="3.6" y="11.1" width="1.700" height="1.700" fill="#2030e0"/><rect x="3.6" y="13.4" width="1.700" height="1.700" fill="#2030e0"/><rect x="3.6" y="15.7" width="1.700" height="1.700" fill="#2030e0"/><rect x="6.2" y="6.5" width="1.700" height="1.700" fill="#e02020"/><rect x="6.2" y="8.8" width="1.700" height="1.700" fill="#e02020"/><rect x="6.2" y="11.1" width="1.700" height="1.700" fill="#e02020"/><rect x="6.2" y="13.4" width="1.700" height="1.700" fill="#e02020"/><rect x="6.2" y="15.7" width="1.700" height="1.700" fill="#e02020"/><rect x="8.8" y="6.5" width="1.700" height="1.700" fill="#20a040"/><rect x="8.8" y="8.8" width="1.700" height="1.700" fill="#20a040"/><rect x="8.8" y="11.1" width="1.700" height="1.700" fill="#20a040"/><rect x="8.8" y="13.4" width="1.700" height="1.700" fill="#20a040"/><rect x="8.8" y="15.7" width="1.700" height="1.700" fill="#20a040"/><rect x="11.4" y="6.5" width="1.700" height="1.700" fill="#2030e0"/><rect x="11.4" y="8.8" width="1.700" height="1.700" fill="#2030e0"/><rect x="11.4" y="11.1" width="1.700" height="1.700" fill="#2030e0"/><rect x="11.4" y="13.4" width="1.700" height="1.700" fill="#2030e0"/><rect x="11.4" y="15.7" width="1.700" height="1.700" fill="#2030e0"/><rect x="14" y="6.5" width="1.700" height="1.700" fill="#e02020"/><rect x="14" y="8.8" width="1.700" height="1.700" fill="#e02020"/><rect x="14" y="11.1" width="1.700" height="1.700" fill="#e02020"/><rect x="14" y="13.4" width="1.700" height="1.700" fill="#e02020"/><rect x="14" y="15.7" width="1.700" height="1.700" fill="#e02020"/><path d="M14.500 1.500l-4 4M10.500 2.800v2.700h2.700" stroke="#333" stroke-width="0.900" fill="none"/></svg>
<svg class="ic" style="left:0px;top:573px" width="18" height="19" viewBox="0 0 18 19"><rect x="0.500" y="0.800" width="17" height="9.500" fill="#e8e8e8" stroke="#8a8a8a" stroke-width="1"/><rect x="1.500" y="2" width="3.500" height="7" fill="#fff" stroke="#999" stroke-width="0.600"/><path d="M8 8l2-4 3 1 1-3M9 3l3 5" stroke="#3a80c8" stroke-width="1" fill="none"/><rect x="10.500" y="11" width="7.300" height="7.300" rx="1.500" fill="#f89820"/><path d="M12.800 17v-4.800h2c1.400 0 1.400 2.600 0 2.600h-2" stroke="#fff" stroke-width="1.200" fill="none"/></svg>
<svg class="ic" style="left:0px;top:601px" width="18" height="17" viewBox="0 0 18 17"><path d="M1.500 0.800h10l3 3v4h-13z" fill="#f4f4f4" stroke="#c0c0c0" stroke-width="0.800"/><path d="M3 2.500h2M6 2.500h2M9 2.500h2M3 4.500h9" stroke="#b8c0c8" stroke-width="1.200"/><rect x="0.500" y="6.500" width="17" height="9.500" fill="#e8c878" stroke="#a88838" stroke-width="1"/><rect x="0.500" y="6.500" width="17" height="2" fill="#f4dc98"/><rect x="7" y="10.500" width="4" height="1.800" fill="#5a4a2a"/></svg>
<svg class="ic" style="left:0px;top:628px" width="18" height="16" viewBox="0 0 18 16"><rect x="0.800" y="1.800" width="15.500" height="13" fill="#fff" stroke="#3a70d8" stroke-width="1.300"/><rect x="0.800" y="1.800" width="15.500" height="2.500" fill="#3a70d8"/><path d="M3 7.500h5M3 10h4M3 12.500h9" stroke="#e05050" stroke-width="1"/><path d="M6 11L15.500 1.500l2 1.500L8.500 12.500l-3 1z" fill="#f0b030" stroke="#a86808" stroke-width="0.600"/></svg>
<svg class="ic" style="left:3px;top:654px" width="13" height="19" viewBox="0 0 13 19"><circle cx="3.500" cy="3.500" r="2.800" fill="#3a78b8" stroke="#1a3a5a" stroke-width="0.700"/><path d="M2 2.500c1-.5 2 .5 3 0" stroke="#7ac070" stroke-width="1" fill="none"/><path d="M3 6.500c-1 3 1 5 3 6" stroke="#707880" stroke-width="1.400" fill="none"/><path d="M5 8l5 3.500 1.500 6h-7z" fill="#e0e4ea" stroke="#8a90a0" stroke-width="0.800"/><path d="M4 17.500h8.500" stroke="#50586a" stroke-width="1.300"/></svg>
<svg class="ic" style="left:1.5px;top:681px" width="16" height="19" viewBox="0 0 16 19"><rect x="0.800" y="0.800" width="14" height="17.500" fill="#fdfdfd" stroke="#b8b8b8" stroke-width="1"/><path d="M3 4h9.500M3 6.500h9.500M3 9h5" stroke="#d8d8d8" stroke-width="0.900"/><path d="M8 9.500l6.500 6.500" stroke="#e8d820" stroke-width="1.800"/><path d="M8 9.500l6.500 6.500" stroke="#b0a000" stroke-width="0.400"/></svg>
<svg class="ic" style="left:7px;top:722.5px" width="5" height="7" viewBox="0 0 5 7"><path d="M0.500 0.500l2 2 2-2M0.500 3.800l2 2 2-2" stroke="#222" stroke-width="1.200" fill="none"/></svg>
<svg class="ic" style="left:6px;top:734px" width="6" height="4" viewBox="0 0 6 4"><path d="M0.500 0v4M2.700 0v4M4.900 0v4" stroke="#c4c2bf" stroke-width="0.900"/></svg>
<svg class="ic" style="left:0px;top:744px" width="18" height="18" viewBox="0 0 18 18"><path d="M0.500 4v10.500c0 2 4 3 8.500 3s8.500-1 8.500-3V4z" fill="#2a58a8"/><ellipse cx="9" cy="4" rx="8.500" ry="3.200" fill="#5a90d8" stroke="#1a3a7a" stroke-width="0.700"/><path d="M0.500 8c0 2 4 3 8.500 3s8.500-1 8.500-3M0.500 11.500c0 2 4 3 8.500 3s8.500-1 8.500-3" fill="none" stroke="#c8d8f0" stroke-width="0.900"/><path d="M0.500 4v10.500c0 2 4 3 8.500 3s8.500-1 8.500-3V4" fill="none" stroke="#14285a" stroke-width="0.900"/><circle cx="11.500" cy="11" r="3.300" fill="none" stroke="#e0e020" stroke-width="1.800"/><path d="M12.500 12.500l2.500 3" stroke="#58b030" stroke-width="1.800"/></svg>
<svg class="ic" style="left:38.5px;top:42px" width="18" height="16" viewBox="0 0 18 16"><path d="M5 10.300L14.800 2.300" stroke="#2f8fe2" stroke-width="3.900" stroke-linecap="round"/><path d="M2 12.300l1.600-3 2.200 2.400z" fill="#1e62b4"/><path d="M3 13.300l11 2.300" stroke="#c2c2c2" stroke-width="1.200"/></svg>
<svg class="ic" style="left:40px;top:71px" width="14" height="14" viewBox="0 0 14 14"><rect x="0.600" y="0.600" width="12.800" height="12.800" rx="1.500" fill="#bcbcbc" stroke="#a4a4a4" stroke-width="0.900"/><rect x="3" y="0.800" width="8" height="4.800" fill="#f2f2f2"/><rect x="2.500" y="7.500" width="9" height="6" fill="#dedede"/><rect x="8.300" y="1.500" width="1.800" height="3" fill="#bcbcbc"/></svg>
<svg class="ic" style="left:38.5px;top:95px" width="18" height="18" viewBox="0 0 18 18"><path d="M3.500 7L9 2.500l5.500 4.300.5 8.700" fill="none" stroke="#6f6f6f" stroke-width="1.500"/><path d="M3.500 7L3 15.500" fill="none" stroke="#6f6f6f" stroke-width="1.500"/><path d="M3 15.500h12" fill="none" stroke="#6f6f6f" stroke-width="1.500" stroke-dasharray="4.500 1.200"/><g fill="#6f6f6f"><circle cx="9" cy="2.800" r="2.100"/><circle cx="3.500" cy="7" r="2.100"/><circle cx="14.500" cy="7" r="2.100"/><circle cx="3" cy="15.500" r="2.100"/><circle cx="15" cy="15.500" r="2.100"/></g></svg>
<svg class="ic" style="left:39.5px;top:122px" width="16" height="17" viewBox="0 0 16 17"><g fill="#6f6f6f"><path d="M8 0.500l3 4h-6zM8 16.500l3-4h-6zM0.500 8.500l4-3v6zM15.500 8.500l-4-3v6z"/></g></svg>
<svg class="ic" style="left:38.5px;top:149px" width="18" height="18" viewBox="0 0 18 18"><path d="M3.500 14.500L7 5l8-2.500" fill="none" stroke="#6f6f6f" stroke-width="1.500"/><g fill="#6f6f6f"><circle cx="3.500" cy="14.300" r="2.700"/><circle cx="6.800" cy="5" r="2.500"/><circle cx="14.800" cy="3" r="2.700"/><path d="M9.200 7.800l7.300 5.500-3.700.4-2.600 3z"/></g></svg>
<svg class="ic" style="left:40px;top:178px" width="14" height="15" viewBox="0 0 14 15"><circle cx="7" cy="7.500" r="6.500" fill="#e2e2e2" stroke="#cfcfcf" stroke-width="0.800"/><circle cx="7" cy="7.500" r="5.200" fill="#6e6e6e"/><path d="M4.800 5.300l4.400 4.400M9.200 5.300l-4.400 4.400" stroke="#f4f4f4" stroke-width="1.800"/></svg>
<svg class="ic" style="left:40px;top:203px" width="15" height="17" viewBox="0 0 15 17"><path d="M8.500 0.500C10 4 9 8 6.500 11.500M6.500 0.800C6.500 5 8 8.500 11 11" fill="none" stroke="#a8a8a8" stroke-width="1.400"/><ellipse cx="4" cy="13" rx="2.600" ry="2" fill="none" stroke="#a8a8a8" stroke-width="1.300" transform="rotate(-35 4 13)"/><ellipse cx="11.500" cy="7" rx="2.300" ry="1.800" fill="none" stroke="#a8a8a8" stroke-width="1.300" transform="rotate(40 11.500 7)"/></svg>
<svg class="ic" style="left:39.5px;top:231px" width="16" height="15" viewBox="0 0 16 15"><path d="M1 0.800h6l3 3v6.500H1z" fill="#ececec" stroke="#b4b4b4" stroke-width="0.900"/><path d="M6 4.500h6l3 3v6.500H6z" fill="#f4f4f4" stroke="#b4b4b4" stroke-width="0.900"/><path d="M8 8.500h5M8 10.500h5M8 12.500h3" stroke="#c8c8c8" stroke-width="0.800"/></svg>
<svg class="ic" style="left:38px;top:257px" width="18" height="17" viewBox="0 0 18 17"><rect x="1" y="2.500" width="12" height="13" rx="1" fill="#d4d4d4" stroke="#aaaaaa" stroke-width="0.900"/><rect x="4" y="0.800" width="6" height="3" rx="1" fill="#b8b8b8" stroke="#999" stroke-width="0.700"/><path d="M8 6.500h6l3 3v6.500H8z" fill="#f6f6f6" stroke="#a8a8a8" stroke-width="0.900"/><path d="M10 11h5M10 13h5M10 15h3" stroke="#bbb" stroke-width="0.800"/></svg>
<svg class="ic" style="left:38.5px;top:284px" width="18" height="18" viewBox="0 0 18 18"><path d="M3 12C6 6 11 2 16 1c-1 5-5 9-11 11.500z" fill="#c8c8c8" stroke="#adadad" stroke-width="0.800"/><path d="M1 14l6-6" stroke="#a0a0a0" stroke-width="1"/><ellipse cx="8" cy="13.500" rx="3.200" ry="2.800" fill="#f8f8f8" stroke="#b8b8b8" stroke-width="0.900"/><path d="M5 17.200h9" stroke="#c8c8c8" stroke-width="1"/></svg>
<div class="a" style="left:26.500px;top:308px;width:41px;height:17.500px;border:1px solid #dcdad6;border-radius:3px;background:#f0efee;box-sizing:border-box;"><div class="a" style="left:30px;top:0;width:1px;height:15.500px;background:#dcdad6;"></div><div class="t u" style="left:4px;top:0.500px;font-size:10.300px;letter-spacing:-0.300px;color:#b4b2ae;">4,00</div><svg class="ic" style="left:33.500px;top:4px" width="4" height="9" viewBox="0 0 4 9"><path d="M0 2.500L2 0.500 4 2.500zM0 6.500L2 8.500 4 6.500z" fill="#aaa"/></svg></div>
<svg class="ic" style="left:45px;top:331.5px" width="6" height="4" viewBox="0 0 6 4"><path d="M0.500 0v4M2.700 0v4M4.900 0v4" stroke="#c4c2bf" stroke-width="0.900"/></svg>
<svg class="ic" style="left:39.5px;top:344px" width="16" height="10" viewBox="0 0 16 10"><path d="M2 7C5 1 11 1 14.500 7.500" fill="none" stroke="#484848" stroke-width="1.300"/><path d="M0.800 2.500l.7 5.500 5-1.800" fill="none" stroke="#484848" stroke-width="1.300"/></svg>
<svg class="ic" style="left:39.5px;top:371px" width="16" height="10" viewBox="0 0 16 10"><path d="M14 7C11 1 5 1 1.500 7.500" fill="none" stroke="#484848" stroke-width="1.300"/><path d="M15.200 2.500l-.7 5.500-5-1.800" fill="none" stroke="#484848" stroke-width="1.300"/></svg>
<svg class="ic" style="left:39px;top:395px" width="17" height="17" viewBox="0 0 17 17"><circle cx="5.500" cy="5.500" r="4.800" fill="#9c9c9c" stroke="#7c7c7c" stroke-width="0.800"/><path d="M9.500 5.500l5 .5 2 5-3 5h-5.500l-2.500-5z" fill="#9c9c9c" stroke="#7c7c7c" stroke-width="1"/><path d="M12.500 1v3M11 2.500h3" stroke="#7c7c7c" stroke-width="0.900"/></svg>
<svg class="ic" style="left:39px;top:422px" width="17" height="17" viewBox="0 0 17 17"><path d="M4 1.500c4-2 10-1 11.500 2s1 9-1.500 11.500-8 1.500-11 0S0 4 4 1.500z" fill="#b4b4b4" stroke="#7c7c7c" stroke-width="1"/><path d="M6.500 6.500l2.500 1 1.500 2.500-1.500 2.500-3 .5-1.500-2.500.3-2.800z" fill="#f6f6f6" stroke="#d0d0d0" stroke-width="0.600"/></svg>
<svg class="ic" style="left:39px;top:449px" width="17" height="18" viewBox="0 0 17 18"><path d="M4 2C8-0.500 14 1 15.500 5s0 9-3 10-5-1-4.500-4S5 8 3.500 7 1.500 3.500 4 2z" fill="#b4b4b4" stroke="#7c7c7c" stroke-width="1"/><circle cx="4" cy="13.500" r="3" fill="#f6f6f6" stroke="#7c7c7c" stroke-width="1.300" stroke-dasharray="2 1.200"/></svg>
<svg class="ic" style="left:39px;top:476px" width="17" height="17" viewBox="0 0 17 17"><path d="M4 1.500c4-2 10-1 11.500 2s1 9-1.500 11.500-8 1.500-11 0S0 4 4 1.500z" fill="#9c9c9c" stroke="#7c7c7c" stroke-width="1"/><path d="M5.500 9l2.500 1 1 2.500-2 2-3-.5-1-2.500z" fill="#f6f6f6" stroke="#d0d0d0" stroke-width="0.600"/><circle cx="11" cy="5.500" r="3.800" fill="#c4c4c4"/><path d="M9 3.500l4 4M13 3.500l-4 4" stroke="#f4f4f4" stroke-width="1.400"/></svg>
<svg class="ic" style="left:39px;top:503px" width="17" height="18" viewBox="0 0 17 18"><path d="M4 2C8-0.500 14 1 15.500 5s0 9-3 10-5-1-4.500-4S5 8 3.500 7 1.500 3.500 4 2z" fill="#9c9c9c" stroke="#7c7c7c" stroke-width="1"/><circle cx="4" cy="14" r="2.800" fill="#f6f6f6" stroke="#7c7c7c" stroke-width="1.300" stroke-dasharray="2 1.200"/><circle cx="11" cy="5.500" r="3.800" fill="#c4c4c4"/><path d="M9 3.500l4 4M13 3.500l-4 4" stroke="#f4f4f4" stroke-width="1.400"/></svg>
<svg class="ic" style="left:38.5px;top:529.5px" width="18" height="18" viewBox="0 0 18 18"><path d="M3.500 14.500L7 5l8-2.500" fill="none" stroke="#6f6f6f" stroke-width="1.500"/><g fill="#6f6f6f"><circle cx="3.500" cy="14.500" r="2.300"/><circle cx="7" cy="5" r="2.100"/><circle cx="15" cy="2.800" r="2.300"/></g><path d="M12 7l1.500 3 3.300.4-2.400 2.300.6 3.300-3-1.600-2.900 1.600.6-3.300L7.300 10.400l3.300-.4z" fill="#d0d0d0" stroke="#b8b8b8" stroke-width="0.600"/></svg>
<svg class="ic" style="left:38px;top:557px" width="18" height="18" viewBox="0 0 18 18"><path d="M0.500 0.500C10 1 17 8 17.500 17.500H0.500z" fill="#cdcdcd"/><path d="M0.500 1C10 1.500 16.500 8 17 17.500" fill="none" stroke="#6a6a6a" stroke-width="1.600"/><path d="M0.500 8C6 8.500 9.500 12 10 17.500" fill="none" stroke="#8a8a8a" stroke-width="1.300" stroke-dasharray="2.500 1.500"/><path d="M6 6.500h5.500v5.500z" fill="#4a4a4a"/></svg>
<svg class="ic" style="left:39px;top:584px" width="17" height="18" viewBox="0 0 17 18"><circle cx="3.500" cy="5" r="1.800" fill="none" stroke="#3c3c3c" stroke-width="1.200"/><circle cx="7" cy="2.500" r="1.800" fill="none" stroke="#3c3c3c" stroke-width="1.200"/><path d="M4.500 6.500l8 3.500M8 4l3 7" stroke="#3c3c3c" stroke-width="1.200"/><path d="M7.500 9.500C5 11 3 13 2.500 16M10.500 10c2.500 1.500 4 3.500 4.500 6" fill="none" stroke="#707070" stroke-width="1.400"/><path d="M0.800 13.500l1.700 4 2.500-3.500zM13 14.500l2.500 3 1.300-4z" fill="#707070"/></svg>
<svg class="ic" style="left:38px;top:610.5px" width="18" height="18" viewBox="0 0 18 18"><path d="M7 2.500c4-2.500 9-1 10 3s0 7-2.500 9-5.500 0-7.500 1-4.500 0-5-2.500 1-5 2.500-7z" fill="#fafafa" stroke="#606060" stroke-width="1.400"/><path d="M5 1l1.500 3 3.300.4-2.400 2.300.6 3.300-3-1.600-2.900 1.600.6-3.300L0.300 4.400l3.300-.4z" fill="#d0d0d0" stroke="#b8b8b8" stroke-width="0.600"/></svg>
<svg class="ic" style="left:38px;top:637.5px" width="18" height="18" viewBox="0 0 18 18"><path d="M7 2.500c4-2.500 9-1 10 3s0 7-2.500 9-5.500 0-7.500 1-4.500 0-5-2.500 1-5 2.500-7z" fill="#fafafa" stroke="#606060" stroke-width="1.400"/><path d="M5 1l1.500 3 3.300.4-2.400 2.300.6 3.300-3-1.600-2.900 1.600.6-3.300L0.300 4.400l3.300-.4z" fill="#d0d0d0" stroke="#b8b8b8" stroke-width="0.600"/></svg>
<svg class="ic" style="left:39px;top:666px" width="17" height="16" viewBox="0 0 17 16"><path d="M12.500 12.500a6 6 0 1 1 1.500-6" fill="none" stroke="#b4b4b4" stroke-width="2.200"/><path d="M10.500 6.500l6-.5-2.500-5z" fill="#b4b4b4"/></svg>
<svg class="ic" style="left:45px;top:692px" width="6" height="4" viewBox="0 0 6 4"><path d="M0.500 0v4M2.700 0v4M4.900 0v4" stroke="#c4c2bf" stroke-width="0.900"/></svg>
<div class="a" style="left:40px;top:704.500px;width:16px;height:14px;transform:rotate(24deg);transform-origin:50% 50%;"><div class="t" style="left:0;top:-2px;font-size:8px;font-weight:bold;color:#222;letter-spacing:-0.300px;">ABC</div><div class="a" style="left:-0.500px;top:9.500px;width:16.500px;height:1.600px;background:#2a80f0;"></div></div>
<svg class="ic" style="left:37px;top:750px" width="5" height="7" viewBox="0 0 5 7"><path d="M0.500 0.500l2 2 2-2M0.500 3.800l2 2 2-2" stroke="#222" stroke-width="1.200" fill="none"/></svg>
<svg class="ic" style="left:45px;top:760.5px" width="6" height="4" viewBox="0 0 6 4"><path d="M0.500 0v4M2.700 0v4M4.900 0v4" stroke="#c4c2bf" stroke-width="0.900"/></svg>
<svg class="ic" style="left:0;top:0" width="1220" height="788" viewBox="0 0 1220 788">
<g fill="#1915a8" stroke="#000" stroke-width="1.200" stroke-linejoin="round" shape-rendering="crispEdges">
<polygon points="729.2,105.8 733,104 738.3,103.1 744,104.2 750.2,105.8 756,107.6 761,109.6 762.3,108 763.2,106.9 765,109 766.4,111.2 767.6,108.6 768.6,106.3 772,107.4 776,108 775,109.5 774,110.6 777,111.1 780.4,111.2 785,109.7 789,108.5 793,107.3 797.7,106.3 802,105.7 806.3,105.3 808.3,104 809.6,102.6 811.5,104.4 813.9,105.8 818,105.4 822.5,104.7 825.5,104.3 827.9,103.6 828.2,102.5 827.6,101.7 829.5,99.6 832.7,97.3 836,95.4 839,94.1 842,95 844.1,96.7 844,99 843.5,101.7 844.5,105 845.4,108.6 846.4,110.3 847.3,108.1 846.4,104 846,100.5 847.5,98.3 849.2,96.7 853.5,97.2 858.1,97.3 861.5,96 864.4,94.7 869,93.1 873.3,91.6 880,89.9 886,88.4 892,87.1 898.7,85.9 904,86 908.8,85.9 915,84.8 921.5,84 928,84.2 934.2,84.6 940,85.7 944,86.3 948.8,86.8 950.2,89.2 946,90.6 940.6,91.6 935,93.6 930.4,95.4 936,94.8 941.8,94.1 945,93.5 948.8,93.4 960,93.8 973.6,93.4 981,93.6 988.2,94.1 989.8,96.5 991.1,99.2 993,100.2 995.5,100.7 997,99.2 998.4,97.7 1007,98 1015.9,98.5 1019,97.4 1021.8,96.3 1032,96.5 1040,97.2 1045,98.8 1049.5,100.2 1059,100.6 1068.5,100.7 1070,102.2 1071.4,103.6 1080,103.9 1089.5,104 1093,103.6 1097.1,103.6 1108,104 1119.9,104.5 1120.9,106.9 1121.1,111 1120.9,115.4 1115,116 1108.5,116.4 1113,117 1117.1,117.8 1118.5,120 1119.4,122.1 1117,122 1114.2,121.6 1110,122.2 1106.6,123.1 1103.5,124.4 1100.9,125.9 1098.5,127.5 1096.1,128.8 1094.6,127.8 1093.3,127.3 1089.5,128.2 1085.7,128.8 1082.8,129.2 1080,129.7 1078.8,131 1078.1,132.6 1077.6,134.5 1077.1,136.4 1075.8,139.3 1074.3,142.1 1071.5,144.2 1068.5,145.9 1064.5,148.9 1060.5,151.6 1059.2,146 1058.1,141.1 1059.8,138 1061.9,135.4 1066.5,132.4 1071.4,129.7 1075,127.2 1078.1,125 1079.2,123.4 1077.5,122.8 1076.2,123.1 1074.2,124.2 1072.4,125 1070.8,126.2 1069.5,126.9 1068.4,125.6 1067.6,124.5 1064.5,124.8 1061.9,125.4 1058,127.6 1054.3,129.7 1050,130.4 1045.7,130.7 1040,129.7 1036,129.7 1033.4,129.9 1028,130.8 1023.2,132 1019.5,133.8 1015.9,135.7 1012,138 1008.6,140.1 1007.6,141.6 1007.2,143 1010,143.2 1012.5,144.3 1015.5,145.2 1018.8,145.9 1019.4,149.5 1019.6,153.2 1016.5,157 1013,160.5 1008.5,165 1004.2,169.3 999,172.2 994,174.4 994.1,171 994.7,167.8 998,166.2 1001.3,164.9 1002.6,162.4 1003.5,159.8 999.5,159.6 995.5,159.1 994.5,156 994,153.2 989,152.7 983.8,151.8 981.5,149 979.4,146.6 974,146.1 969.2,145.9 968.6,148.2 967.7,150.3 965,153.3 961.9,156.1 955,155.9 948.8,155.4 944,156.3 940,156.9 938,156.8 936.8,156.9 935.5,155 934.2,153.8 929,153.9 925.3,153.8 922.5,152.3 920.3,151.2 915.5,150.5 911.4,150 909.6,152.4 907.6,154.4 902,153.6 896.2,153.1 891.5,153.4 887.3,153.8 884,155.5 880.9,156.9 877,154.6 873.3,152.5 868,152 863.2,151.2 861.3,149.2 859.3,147.4 852,146.1 845.4,144.9 842,144.2 839,143.6 834,142.4 829,142.3 823,143 817.1,143.6 815,145.8 812.8,147.9 814,150 815,151.7 810.5,151.5 806.3,151.1 801,152 795.5,152.7 790,152.5 784.7,152.2 781.3,153.9 778.3,155.4 778.2,157.6 778.3,159.7 781,162 783.7,164.1 781,167.5 778.8,170.5 780.3,173 781.5,175.4 780.6,176.6 779.9,177.5 778,176.6 776.1,175.9 772,174.4 768.6,173.2 763.5,172.5 758.8,171.6 754.5,169.4 750.8,167.3 751.5,165.6 752.4,164.1 754.6,161.8 756.7,159.7 757.9,157.8 758.8,156 755.5,155.2 752.4,154.3 748.5,152.7 744.8,151.1 741,149.4 737.8,147.9 737.1,145 736.2,142.5 732.2,140.3 728.6,138.2 727.1,135.4 725.9,132.8 727.1,130 728.6,127.4 732,124.6 735.1,122 734.1,117.5 733,113.3 731,109.5"/>
<polygon points="790,98.700 792,96 795.600,93.900 802,91 810.700,88.300 820,86.200 833.300,84.900 834,86.200 822,88 810.700,91.100 805,93.500 801.200,95.800 800,98 800.300,100.500 803,101.600 805,102.700 800,102.900 795.600,102.400 792,101"/>
<polygon points="1023.900,143 1025.400,151.800 1029,157.600 1026.100,158.300 1026.900,164.900 1023.200,164.900 1021.800,151.800 1021,145.900"/>
<polygon points="1007.200,141.800 1010,140.800 1012.800,142.200 1011,143.800 1008.200,143.600" fill="#fff"/>
<polygon points="707,142.300 709,141.500 713,141.400 715.500,142.200 714,143.400 709,143.600"/>
<polygon points="780,104.200 783,103.400 785.500,104.400 783,105.800"/>
<polygon points="821,100 823.500,98.800 825,100.500 822.500,101.600"/>
<polygon points="890.400,76.300 895,74.500 901.200,73.800 905,74.400 908.800,75.700 911.500,77 913.900,78.900 909,79.400 903.800,79.500 900,79 896.200,78.200 893,77.500"/>
<polygon points="915.200,80.200 918,79.300 921.500,78.900 925,79.300 929.100,80.200 930.800,81.200 931.700,82.100 926,82.300 921.500,82.100 918,81.400"/>
<polygon points="1010,88.700 1014,87.600 1020,87.400 1027,87.800 1030.500,88.800 1030,90.200 1024,90.300 1016,90.400 1011,90"/>
<polygon points="1033.400,89.500 1039,89 1044,89.400 1046.600,90.300 1045.500,91.200 1040,91.300 1035,90.900"/>
<polygon points="1017.400,93 1021,92.500 1026.100,93 1026,94.600 1021,94.900 1017.600,94.300"/>
<polygon points="1117.100,99.900 1119,99.100 1121.400,99.300 1120.500,100.600 1119,101.200"/>
<polygon points="1090.500,103.400 1093,103 1094.500,104 1092,104.600" fill="#fff"/>
</g>
<g fill="#000"><ellipse cx="776.5" cy="75.8" rx="4.5" ry="1.100"/><ellipse cx="786" cy="75.5" rx="4" ry="1.100"/><ellipse cx="796" cy="75" rx="4" ry="1.100"/><ellipse cx="805" cy="74.1" rx="7" ry="1.100"/><ellipse cx="817.5" cy="73.8" rx="7.5" ry="1.100"/><ellipse cx="810" cy="76.3" rx="6" ry="1.100"/><circle cx="852.4" cy="78.2" r="0.850"/><circle cx="854.5" cy="78.4" r="0.850"/><circle cx="860.6" cy="75.1" r="0.850"/><circle cx="862.5" cy="75.3" r="0.850"/><circle cx="868.9" cy="84" r="0.850"/><circle cx="867.6" cy="89" r="0.850"/><circle cx="868.6" cy="90.3" r="0.850"/><circle cx="860.6" cy="91.6" r="0.850"/><circle cx="886" cy="84.6" r="0.850"/><circle cx="888.5" cy="84.2" r="0.850"/><circle cx="893.6" cy="82.7" r="0.850"/><circle cx="1006.4" cy="89" r="0.850"/><circle cx="1006.4" cy="92.6" r="0.850"/><circle cx="1040" cy="85.3" r="0.850"/><circle cx="1050.2" cy="87.5" r="0.850"/><circle cx="1060.4" cy="84.9" r="0.850"/><circle cx="1064.1" cy="85.3" r="0.850"/><circle cx="1050" cy="87" r="0.850"/><circle cx="1083.8" cy="141.1" r="0.850"/><circle cx="1086.5" cy="141.9" r="0.850"/><circle cx="1090.4" cy="143" r="0.850"/><circle cx="724.5" cy="129.5" r="0.850"/><circle cx="1071" cy="100.2" r="0.850"/><circle cx="1074" cy="100.5" r="0.850"/></g>
<g fill="#000"><path d="M862,97.500l2.500-1.800 3,0.500 2.500-1.700 4,-0.300 -1.500,2 -4,0.800 -2.500,1.800 -3,0.200z"/><path d="M872,92.800l4,-1.600 5,-0.800 -1,1.600 -4.500,1.200z"/><path d="M850,100.500l2.500,-1 2,1.200 3.500,0.300 -1,1.500 -4,-0.200z"/><path d="M884,89.200l5,-1.400 6,-1 -2,1.600 -6,1.400z"/><path d="M929,95.800l4,-2 6,-1.600 4,-0.300 -3,1.800 -6,1.300 -3,1.400z"/><path d="M759,108.500l3,1.500 2,-1.500 1.500,2.500 -3,1 -3,-1.500z"/></g>
<path d="M1032.500,170.600 l2.500,-1.200 4,-1.700 4,-2.300 5,-3.300 4,-3.200 4,-3.700 3.500,-3.400" fill="none" stroke="#000" stroke-width="1.500" stroke-dasharray="5 1 3 0.800 6 1.200 2 0.800"/>
<circle cx="1033.300" cy="170.500" r="1.200" fill="#fff" stroke="#000" stroke-width="0.900"/>
<g fill="none" stroke="#000" stroke-width="1.200" stroke-linejoin="round" stroke-linecap="round" shape-rendering="crispEdges">
<polyline points="734,111.2 740,112.3 743.4,112.6 747,112.8 751.5,112.5 755,112.3 758.5,111.9 762,111.2"/>
<polyline points="751.3,116.6 752.4,122 755.6,126.3"/>
<polyline points="746,114 749,115.5 751.3,116.6 756,117.2 760,116"/>
<polyline points="728.6,126.8 732.9,126.7 738,126.6 742.7,126.8 747,126.3 750.8,126.3 755.6,126.8 760.3,127.2 766,126.9 770,126.2 774,127.1 777.2,126.3"/>
<polyline points="777.2,118.2 780,120.5 782.6,123 781,124.5 783.7,130.6"/>
<polyline points="773,117 777.2,118.2 781.1,117 784.7,115.5 788.4,115.2 792.9,115.6 797,116.4 800.8,116.2 804.8,116.5 809.6,116.6 812.7,115.1 816,112.8 819.8,110.6 823.6,108"/>
<polyline points="809.6,116.6 810.6,121 809.6,127.4 809,132 808.5,136 805.2,140.3"/>
<polyline points="810.6,124.1 815,125.2 820,125.8"/>
<polyline points="810.3,117.2 815,117.8 820,118.2"/>
<polyline points="726.5,132.8 731.3,132.4 736.2,131.7 739.7,131.1 744,131.6 747,130.6"/>
<polyline points="747,126.3 748,130.6 752.4,134.9 756.7,138.2"/>
<polyline points="736.2,137.1 741.5,136.2 745.9,134.9 749.5,133.5 753.5,132.8 758.1,132 763.2,132.2 767,131.7 770.6,131.3 774.2,131.4 777.2,130.6"/>
<polyline points="738.3,143.6 742.1,141.6 747,140.3 751.8,139.2 755.6,138.2 761,137.5 765.3,137.1 769.6,137.5 775,137.6"/>
<polyline points="741.6,147.9 745.7,146 749.1,144.6 753,143.9 757.8,143.6 762.7,143.4 766.4,142.5 770.8,142.7 776.1,143.6"/>
<polyline points="747,151.1 752.4,147.9 755.5,147.7 760,148.2 763.2,149 766.9,148.7 770,148.9 774,148.4 777.1,147.7 780.7,146.5 784.7,145.7 791.2,144.1"/>
<polyline points="755.6,132.8 756.4,136.3 757.8,140.3 755.6,145.7 756.7,149.9 756.7,153.3"/>
<polyline points="765.3,131.7 767.5,138.2 766.4,144.6 767.5,151.1 763.2,155.4"/>
<polyline points="777.2,126.3 778.8,132.8 776.1,138.2 776.4,142.4 777.2,145.7 776.1,151.1"/>
<polyline points="783.7,130.6 789.1,132.8 792,130.5 795.5,128.5 799.9,126.3 805,125.5 809.6,127.4"/>
<polyline points="789.1,132.8 788,138.2 785.2,140 781.5,141.4 784.7,145.7"/>
<polyline points="795.5,128.5 795.6,132.8 796.6,136 794.5,140.3 791.2,144.1 789.1,149 790,152.5"/>
<polyline points="796.6,136 800.6,136.8 805.2,138.2 808.5,136"/>
<polyline points="794.5,140.3 798.6,142.2 802,144.6 806.3,150"/>
<polyline points="805.2,140.3 809.6,143.6 812.8,147.9"/>
<polyline points="804.2,142.2 806,141.4 808.5,142.2 806.5,143.2 804.2,142.2"/>
<polyline points="731,134.5 735,139 741,137.5 743,142 749,141.5"/>
<polyline points="742,131.2 744,135.5 750,138.2 752,143.5 748,146"/>
<polyline points="759,132.5 761,137.5 760,143 762,149"/>
<polyline points="770,131.5 772,137.3 771,143 772,148.5"/>
<polyline points="758.8,156 762.4,155.2 766.4,155.4 769.9,155.5 774,155.5 778.3,155.4"/>
<polyline points="763.2,155.4 765.3,161.9 763.2,166.2 767.5,170.5"/>
<polyline points="752.4,164.1 755.8,164.7 760.2,165.5 763.2,166.2 767,165.6 770.7,164.1 774.1,161.5 778.3,159.7"/>
<polyline points="770.7,164.1 772.9,170.5 776.1,175.9"/>
<polyline points="756.7,159.7 761.5,161.2 765.3,161.9 769.3,159.9 774,158.7"/>
<polyline points="758.8,171.6 763.2,168.4 767.5,170.5 772.9,170.5 778.8,170.5"/>
<polyline points="755,167 760,169.5 764,172.3"/>
<polyline points="781,148 784,152"/>
<polyline points="820,118.2 824.1,118.9 827.2,119 831.9,118.7 835.1,118.3 839,118.9 842.9,120.3 848,120.5 852.7,121.2 858.1,121.4 862.3,121.7 867,121.3 871.5,120.8 875.8,120.8"/>
<polyline points="820,125.8 823.8,127.4 827.9,128.1 832.7,129.7 836.3,130.6 840,130.4 843.9,130.8 846.4,131.4 850.5,132.2 855.5,127.7 860.2,126.8 865,126.9 869.4,126.5 874.6,126.5"/>
<polyline points="863.2,97.3 866,103 868.5,105.1 870.8,108.1 873.5,113 875.8,118.2 876.5,123 875.8,127.1 880,130 884.7,132.2 885.5,137 886,141.1 885.2,145.4 884.7,148.7"/>
<polyline points="870.8,108.1 875.8,108.6 879.7,108.7 883.7,108.2 886.9,106.9 891.1,106.8 895,106.3 900,104.8 904.6,104.8 908.8,103.6 912.8,104.1 918,104.3 922.9,104.6 927.9,104.3 931.9,104.3 935.9,103.1 940.6,102.4 946.9,99.8 949,96.5 948.8,93.4"/>
<polyline points="891.1,106.8 887,110.5 886,113.8 888.8,117.1 891.1,119.5 889.8,124.6 893.9,125.7 897.8,126.8 901.2,127.1 903.8,130.3 908.7,130.2 914,129.6 918.2,129.6 921.4,129.1 925.3,128.4 927.9,125.8 929.6,122.1 930.4,118.2 931.2,113 931.7,108.1 927.9,104.3"/>
<polyline points="925.3,128.4 921,131.1 916.5,133.5 912.1,134.3 908.8,134.7 907.5,139 905,142.3 902.1,145.4 898.7,148.7 893.6,150 891.5,153.4"/>
<polyline points="930.4,118.2 936.8,119.5 938.5,125 940.6,129.7 945.1,129.4 949,129.2 953.3,128.4 960,129.7"/>
<polyline points="940.6,129.7 938.8,133.8 938,137.3 941.9,138 946.9,138.5 950.7,137.3 954.7,136.8 958.3,136"/>
<polyline points="938,137.3 936.2,142.2 934.2,146.1 934.6,149.4 935.5,153.8"/>
<polyline points="958.3,136 955.5,139.6 952.9,142.3 950.7,146.1 947.7,147.6 943.7,149.1 940.1,150.1 936.8,151.2"/>
<polyline points="920.3,146.3 923,145 926,146.6 929.1,145.8 927,147.6 923,147"/>
<polyline points="820,133.5 825,136 828.5,134.2 833,133.1 836.5,130.9 840.5,131.1 843.6,131.3 846.6,131.9 850.5,132.2"/>
<polyline points="839,132.8 840.1,138 840.3,142.3 845.7,143.5 850.5,143.6 850.8,139.4 851.7,136 850.5,132.2"/>
<polyline points="851.7,136 855.5,136.4 859,137.2 863.3,137.9 866.8,139 870.8,139.2 874.9,137.4 877.2,135.1 881.7,133.4 884.7,132.2"/>
<polyline points="850.5,143.6 854.6,144.1 857.9,144.8 861.9,144.9 865.6,143.6 870.3,142.6 874.6,142.3 870.8,139.2"/>
<polyline points="874.6,142.3 877.5,144.5 879.7,147.4 874.6,151.2 869.9,149.8 866.3,149.5 861.9,148.7"/>
<polyline points="879.7,147.4 886,148.7 886.8,145.1 887.3,141.1 892.3,144.9 893.6,150"/>
<polyline points="820,142.3 824.9,143.1 829,142.8 834.2,142.8 839,143.6"/>
<polyline points="862,108 866,112.5 872,114 876,118.2"/>
<polyline points="852,101 856,103 862,102.5 866,103"/>
<polyline points="1071.4,103.6 1075.2,106.4 1070.4,107.2 1065.7,108.8 1065.7,112.6 1068.6,113.8 1073,114.7 1076.2,116.4 1078.1,118.3 1076.2,123.1"/>
<polyline points="1065.7,112.6 1061,112.7 1057.1,113.2 1052.4,113.5 1048.6,117.4 1044.4,117.9 1040,117.8 1033.4,119.6 1030.5,122.6 1034.9,126.9 1033.4,129.9"/>
<polyline points="1078.1,117.4 1082.4,118.1 1087.5,117.5 1091.4,118.3 1093.3,121.6 1098.3,122.4 1101.7,122.5 1106.6,123.1"/>
<polyline points="1059,138.3 1063,137.8 1066.6,136.4 1070.8,135.5 1075.2,134.5"/>
<polyline points="1030.5,122.6 1027.1,123.2 1023.2,123 1018.8,123.3 1013,126.9 1009.5,127.6 1006,129.5 1002.2,130.5 998.4,131.3 996.6,135.4 995.5,138.6 998.4,141.5"/>
<polyline points="995.5,138.6 992.2,139.4 987.7,139.4 983.8,139.3 979.9,139.4 976.9,138.4 972.3,138.2 969.2,137.9 965.6,135.7 961.9,132.8 958.2,130 954.6,128.4"/>
<polyline points="998.4,141.5 994,145.9 999.5,145.7 1004.2,146.6 1000.2,148.8 995.5,151.8 994,153.2"/>
<polyline points="961.9,132.8 963.4,138.6 966.9,140.4 970.7,141.5 969.2,145.9"/>
<polyline points="940,137.2 943.2,136.4 947.3,136.7 951.4,136.3 954.6,135.7 960.4,138.6 956.1,143 957.5,148.8 954.1,150.3 950.2,151.2 945.8,153.2"/>
<polyline points="940,145.9 943.7,145.2 947.8,144.7 952.2,143.8 956.1,143"/>
<polyline points="995.5,159.1 1000.3,158.4 1004.2,157.6 1008.4,158.9 1013,160.5"/>
<polyline points="1003.5,159.8 1008,155 1013,152 1019.6,150"/>
</g>
</svg>
<div class="a" style="left:374px;top:244px;width:826px;height:510px;border-radius:5px 5px 0 0;box-shadow:0 4px 7px 0 rgba(0,0,0,0.560),0 0 2px rgba(0,0,0,0.200);background:#f2f1f0;"></div>
<div class="a" style="left:374px;top:244px;width:826px;height:510px;border-radius:5px 5px 0 0;background:#f2f1f0;overflow:hidden;">
<div class="a" style="left:0;top:0;width:826px;height:22px;background:linear-gradient(#55534d,#45443f 25%,#3c3b37);"></div>
<div class="a" style="left:0;top:1px;width:825px;height:509px;">
<svg class="ic" style="left:8px;top:3.500px" width="42" height="14" viewBox="0 0 42 14"><rect x="-0.500" y="0" width="40.500" height="13.600" rx="6.800" fill="#393834"/><defs><radialGradient id="gc" cx="0.5" cy="0.3" r="0.7"><stop offset="0" stop-color="#f47a44"/><stop offset="1" stop-color="#e8541a"/></radialGradient><linearGradient id="gg" x1="0" y1="0" x2="0" y2="1"><stop offset="0" stop-color="#84827c"/><stop offset="1" stop-color="#67665f"/></linearGradient></defs><circle cx="6.300" cy="6.800" r="5.600" fill="url(#gc)" stroke="#a33d14" stroke-width="0.700"/><path d="M4.300 4.800l4 4M8.300 4.800l-4 4" stroke="#4a1e0c" stroke-width="0.900"/><circle cx="19.700" cy="6.800" r="5.600" fill="url(#gg)" stroke="#4a4944" stroke-width="0.700"/><path d="M17.200 6.900h5" stroke="#3c3b37" stroke-width="1"/><circle cx="33.200" cy="6.800" r="5.600" fill="url(#gg)" stroke="#4a4944" stroke-width="0.700"/><rect x="31" y="4.600" width="4.400" height="4.400" fill="none" stroke="#3c3b37" stroke-width="1.100"/></svg>
<div class="t u" style="left:57px;top:3px;font-weight:bold;font-size:10.400px;letter-spacing:0;color:#e6e2d8;">Таблица атрибутов — regions2000_wgs :: выбрано 0 объектов из 1517</div>
<div class="a" style="left:1px;top:21px;width:811px;height:439px;background:#fff;overflow:hidden;border-right:1px solid #c4c1bc;">
<div class="a" style="left:0;top:0;width:813px;height:20px;background:#f2f1f0;"></div>
<div class="a u" style="left:0px;top:0;width:30px;height:19px;line-height:21px;text-align:center;font-size:10.600px;letter-spacing:0.250px;color:#4a4a4a;background:linear-gradient(#fbfbfa,#eae9e7);border-right:1px solid #cfcdc9;border-bottom:1px solid #cfcdc9;"></div><div class="a u" style="left:31px;top:0;padding-right:14px;width:60px;height:19px;line-height:21px;text-align:center;font-size:10.600px;letter-spacing:0.250px;color:#4a4a4a;background:linear-gradient(#fbfbfa,#eae9e7);border-right:1px solid #cfcdc9;border-bottom:1px solid #cfcdc9;">AREA</div><div class="a u" style="left:106px;top:0;width:74px;height:19px;line-height:21px;text-align:center;font-size:10.600px;letter-spacing:0.250px;color:#4a4a4a;background:linear-gradient(#fbfbfa,#eae9e7);border-right:1px solid #cfcdc9;border-bottom:1px solid #cfcdc9;">PERIMETER</div><div class="a u" style="left:181px;top:0;width:74px;height:19px;line-height:21px;text-align:center;font-size:10.600px;letter-spacing:0.250px;color:#4a4a4a;background:linear-gradient(#fbfbfa,#eae9e7);border-right:1px solid #cfcdc9;border-bottom:1px solid #cfcdc9;">region</div><div class="a u" style="left:256px;top:0;width:74px;height:19px;line-height:21px;text-align:center;font-size:10.600px;letter-spacing:0.250px;color:#4a4a4a;background:linear-gradient(#fbfbfa,#eae9e7);border-right:1px solid #cfcdc9;border-bottom:1px solid #cfcdc9;">GOST779B</div><div class="a u" style="left:331px;top:0;width:74px;height:19px;line-height:21px;text-align:center;font-size:10.600px;letter-spacing:0.250px;color:#4a4a4a;background:linear-gradient(#fbfbfa,#eae9e7);border-right:1px solid #cfcdc9;border-bottom:1px solid #cfcdc9;">Universal</div><svg class="ic" style="left:93.500px;top:8px" width="6" height="4" viewBox="0 0 6 4"><path d="M0 4L3 0 6 4z" fill="#8a8885"/></svg>
<div class="row" style="top:20px;background:#fff;"><div class="c" style="left:0;width:27px;padding-left:3px;background:linear-gradient(#f7f6f5,#e9e8e6);border-color:#cfcdc9;">0</div><div class="c r" style="left:31px;width:72px;padding-right:2px;">29809500</div><div class="c r" style="left:106px;width:72px;padding-right:2px;">21822.4</div><div class="c" style="left:181px;width:72px;padding-left:2px;font-family:DejaVu Sans,sans-serif;font-size:10.300px;letter-spacing:0.650px;color:#111;">�����...</div><div class="c" style="left:256px;width:71px;padding-left:3px;letter-spacing:0.280px;">Chukotskij ...</div><div class="c" style="left:331px;width:71px;padding-left:3px;letter-spacing:0.280px;">Chukotskij ...</div></div>
<div class="row" style="top:35px;background:#ededed;"><div class="c" style="left:0;width:27px;padding-left:3px;background:linear-gradient(#f7f6f5,#e9e8e6);border-color:#cfcdc9;">1</div><div class="c r" style="left:31px;width:72px;padding-right:2px;">709138000...</div><div class="c r" style="left:106px;width:72px;padding-right:2px;">8196570</div><div class="c" style="left:181px;width:72px;padding-left:2px;font-family:DejaVu Sans,sans-serif;font-size:10.300px;letter-spacing:0.650px;color:#111;">�����...</div><div class="c" style="left:256px;width:71px;padding-left:3px;letter-spacing:0.280px;">Chukotskij ...</div><div class="c" style="left:331px;width:71px;padding-left:3px;letter-spacing:0.280px;">Chukotskij ...</div></div>
<div class="row" style="top:50px;background:#fff;"><div class="c" style="left:0;width:27px;padding-left:3px;background:linear-gradient(#f7f6f5,#e9e8e6);border-color:#cfcdc9;">2</div><div class="c r" style="left:31px;width:72px;padding-right:2px;">12404400</div><div class="c r" style="left:106px;width:72px;padding-right:2px;">22845.9</div><div class="c" style="left:181px;width:72px;padding-left:2px;font-family:DejaVu Sans,sans-serif;font-size:10.300px;letter-spacing:0.650px;color:#111;">�����...</div><div class="c" style="left:256px;width:71px;padding-left:3px;letter-spacing:0.280px;">Chukotskij ...</div><div class="c" style="left:331px;width:71px;padding-left:3px;letter-spacing:0.280px;">Chukotskij ...</div></div>
<div class="row" style="top:65px;background:#ededed;"><div class="c" style="left:0;width:27px;padding-left:3px;background:linear-gradient(#f7f6f5,#e9e8e6);border-color:#cfcdc9;">3</div><div class="c r" style="left:31px;width:72px;padding-right:2px;">1072420000</div><div class="c r" style="left:106px;width:72px;padding-right:2px;">287108</div><div class="c" style="left:181px;width:72px;padding-left:2px;font-family:DejaVu Sans,sans-serif;font-size:10.300px;letter-spacing:0.650px;color:#111;">�����...</div><div class="c" style="left:256px;width:71px;padding-left:3px;letter-spacing:0.280px;">Arhangel's...</div><div class="c" style="left:331px;width:71px;padding-left:3px;letter-spacing:0.280px;">Arhangel's...</div></div>
<div class="row" style="top:80px;background:#fff;"><div class="c" style="left:0;width:27px;padding-left:3px;background:linear-gradient(#f7f6f5,#e9e8e6);border-color:#cfcdc9;">4</div><div class="c r" style="left:31px;width:72px;padding-right:2px;">1161700</div><div class="c r" style="left:106px;width:72px;padding-right:2px;">4477.59</div><div class="c" style="left:181px;width:72px;padding-left:2px;font-family:DejaVu Sans,sans-serif;font-size:10.300px;letter-spacing:0.650px;color:#111;">�����...</div><div class="c" style="left:256px;width:71px;padding-left:3px;letter-spacing:0.280px;">Chukotskij ...</div><div class="c" style="left:331px;width:71px;padding-left:3px;letter-spacing:0.280px;">Chukotskij ...</div></div>
<div class="row" style="top:95px;background:#ededed;"><div class="c" style="left:0;width:27px;padding-left:3px;background:linear-gradient(#f7f6f5,#e9e8e6);border-color:#cfcdc9;">5</div><div class="c r" style="left:31px;width:72px;padding-right:2px;">7764700000</div><div class="c r" style="left:106px;width:72px;padding-right:2px;">620671</div><div class="c" style="left:181px;width:72px;padding-left:2px;font-family:DejaVu Sans,sans-serif;font-size:10.300px;letter-spacing:0.650px;color:#111;">�����...</div><div class="c" style="left:256px;width:71px;padding-left:3px;letter-spacing:0.280px;">Chukotskij ...</div><div class="c" style="left:331px;width:71px;padding-left:3px;letter-spacing:0.280px;">Chukotskij ...</div></div>
<div class="row" style="top:110px;background:#fff;"><div class="c" style="left:0;width:27px;padding-left:3px;background:linear-gradient(#f7f6f5,#e9e8e6);border-color:#cfcdc9;">6</div><div class="c r" style="left:31px;width:72px;padding-right:2px;">2768630000</div><div class="c r" style="left:106px;width:72px;padding-right:2px;">690218</div><div class="c" style="left:181px;width:72px;padding-left:2px;font-family:DejaVu Sans,sans-serif;font-size:10.300px;letter-spacing:0.650px;color:#111;">�����...</div><div class="c" style="left:256px;width:71px;padding-left:3px;letter-spacing:0.280px;">Arhangel's...</div><div class="c" style="left:331px;width:71px;padding-left:3px;letter-spacing:0.280px;">Arhangel's...</div></div>
<div class="row" style="top:125px;background:#ededed;"><div class="c" style="left:0;width:27px;padding-left:3px;background:linear-gradient(#f7f6f5,#e9e8e6);border-color:#cfcdc9;">7</div><div class="c r" style="left:31px;width:72px;padding-right:2px;">9957750</div><div class="c r" style="left:106px;width:72px;padding-right:2px;">46028.5</div><div class="c" style="left:181px;width:72px;padding-left:2px;font-family:DejaVu Sans,sans-serif;font-size:10.300px;letter-spacing:0.650px;color:#111;">�����...</div><div class="c" style="left:256px;width:71px;padding-left:3px;letter-spacing:0.280px;">Chukotskij ...</div><div class="c" style="left:331px;width:71px;padding-left:3px;letter-spacing:0.280px;">Chukotskij ...</div></div>
<div class="row" style="top:140px;background:#fff;"><div class="c" style="left:0;width:27px;padding-left:3px;background:linear-gradient(#f7f6f5,#e9e8e6);border-color:#cfcdc9;">8</div><div class="c r" style="left:31px;width:72px;padding-right:2px;">113974000</div><div class="c r" style="left:106px;width:72px;padding-right:2px;">55602.8</div><div class="c" style="left:181px;width:72px;padding-left:2px;font-family:DejaVu Sans,sans-serif;font-size:10.300px;letter-spacing:0.650px;color:#111;">�����...</div><div class="c" style="left:256px;width:71px;padding-left:3px;letter-spacing:0.280px;">Arhangel's...</div><div class="c" style="left:331px;width:71px;padding-left:3px;letter-spacing:0.280px;">Arhangel's...</div></div>
<div class="row" style="top:155px;background:#ededed;"><div class="c" style="left:0;width:27px;padding-left:3px;background:linear-gradient(#f7f6f5,#e9e8e6);border-color:#cfcdc9;">9</div><div class="c r" style="left:31px;width:72px;padding-right:2px;">4810370</div><div class="c r" style="left:106px;width:72px;padding-right:2px;">19872.6</div><div class="c" style="left:181px;width:72px;padding-left:2px;font-family:DejaVu Sans,sans-serif;font-size:10.300px;letter-spacing:0.650px;color:#111;">�����...</div><div class="c" style="left:256px;width:71px;padding-left:3px;letter-spacing:0.280px;">Chukotskij ...</div><div class="c" style="left:331px;width:71px;padding-left:3px;letter-spacing:0.280px;">Chukotskij ...</div></div>
<div class="row" style="top:170px;background:#fff;"><div class="c" style="left:0;width:27px;padding-left:3px;background:linear-gradient(#f7f6f5,#e9e8e6);border-color:#cfcdc9;">10</div><div class="c r" style="left:31px;width:72px;padding-right:2px;">2663060</div><div class="c r" style="left:106px;width:72px;padding-right:2px;">7395.85</div><div class="c" style="left:181px;width:72px;padding-left:2px;font-family:DejaVu Sans,sans-serif;font-size:10.300px;letter-spacing:0.650px;color:#111;">�����...</div><div class="c" style="left:256px;width:71px;padding-left:3px;letter-spacing:0.280px;">Chukotskij ...</div><div class="c" style="left:331px;width:71px;padding-left:3px;letter-spacing:0.280px;">Chukotskij ...</div></div>
<div class="row" style="top:185px;background:#ededed;"><div class="c" style="left:0;width:27px;padding-left:3px;background:linear-gradient(#f7f6f5,#e9e8e6);border-color:#cfcdc9;">11</div><div class="c r" style="left:31px;width:72px;padding-right:2px;">4145290</div><div class="c r" style="left:106px;width:72px;padding-right:2px;">21736.3</div><div class="c" style="left:181px;width:72px;padding-left:2px;font-family:DejaVu Sans,sans-serif;font-size:10.300px;letter-spacing:0.650px;color:#111;">�����...</div><div class="c" style="left:256px;width:71px;padding-left:3px;letter-spacing:0.280px;">Chukotskij ...</div><div class="c" style="left:331px;width:71px;padding-left:3px;letter-spacing:0.280px;">Chukotskij ...</div></div>
<div class="row" style="top:200px;background:#fff;"><div class="c" style="left:0;width:27px;padding-left:3px;background:linear-gradient(#f7f6f5,#e9e8e6);border-color:#cfcdc9;">12</div><div class="c r" style="left:31px;width:72px;padding-right:2px;">5685020</div><div class="c r" style="left:106px;width:72px;padding-right:2px;">17097.7</div><div class="c" style="left:181px;width:72px;padding-left:2px;font-family:DejaVu Sans,sans-serif;font-size:10.300px;letter-spacing:0.650px;color:#111;">�����...</div><div class="c" style="left:256px;width:71px;padding-left:3px;letter-spacing:0.280px;">Chukotskij ...</div><div class="c" style="left:331px;width:71px;padding-left:3px;letter-spacing:0.280px;">Chukotskij ...</div></div>
<div class="row" style="top:215px;background:#ededed;"><div class="c" style="left:0;width:27px;padding-left:3px;background:linear-gradient(#f7f6f5,#e9e8e6);border-color:#cfcdc9;">13</div><div class="c r" style="left:31px;width:72px;padding-right:2px;">564976</div><div class="c r" style="left:106px;width:72px;padding-right:2px;">4581.53</div><div class="c" style="left:181px;width:72px;padding-left:2px;font-family:DejaVu Sans,sans-serif;font-size:10.300px;letter-spacing:0.650px;color:#111;">�����...</div><div class="c" style="left:256px;width:71px;padding-left:3px;letter-spacing:0.280px;">Chukotskij ...</div><div class="c" style="left:331px;width:71px;padding-left:3px;letter-spacing:0.280px;">Chukotskij ...</div></div>
<div class="row" style="top:230px;background:#fff;"><div class="c" style="left:0;width:27px;padding-left:3px;background:linear-gradient(#f7f6f5,#e9e8e6);border-color:#cfcdc9;">14</div><div class="c r" style="left:31px;width:72px;padding-right:2px;">1479220</div><div class="c r" style="left:106px;width:72px;padding-right:2px;">8041.16</div><div class="c" style="left:181px;width:72px;padding-left:2px;font-family:DejaVu Sans,sans-serif;font-size:10.300px;letter-spacing:0.650px;color:#111;">�����...</div><div class="c" style="left:256px;width:71px;padding-left:3px;letter-spacing:0.280px;">Chukotskij ...</div><div class="c" style="left:331px;width:71px;padding-left:3px;letter-spacing:0.280px;">Chukotskij ...</div></div>
<div class="row" style="top:245px;background:#ededed;"><div class="c" style="left:0;width:27px;padding-left:3px;background:linear-gradient(#f7f6f5,#e9e8e6);border-color:#cfcdc9;">15</div><div class="c r" style="left:31px;width:72px;padding-right:2px;">4347970</div><div class="c r" style="left:106px;width:72px;padding-right:2px;">9563.41</div><div class="c" style="left:181px;width:72px;padding-left:2px;font-family:DejaVu Sans,sans-serif;font-size:10.300px;letter-spacing:0.650px;color:#111;">�����...</div><div class="c" style="left:256px;width:71px;padding-left:3px;letter-spacing:0.280px;">Chukotskij ...</div><div class="c" style="left:331px;width:71px;padding-left:3px;letter-spacing:0.280px;">Chukotskij ...</div></div>
<div class="row" style="top:260px;background:#fff;"><div class="c" style="left:0;width:27px;padding-left:3px;background:linear-gradient(#f7f6f5,#e9e8e6);border-color:#cfcdc9;">16</div><div class="c r" style="left:31px;width:72px;padding-right:2px;">254672000</div><div class="c r" style="left:106px;width:72px;padding-right:2px;">75208.3</div><div class="c" style="left:181px;width:72px;padding-left:2px;font-family:DejaVu Sans,sans-serif;font-size:10.300px;letter-spacing:0.650px;color:#111;">�����...</div><div class="c" style="left:256px;width:71px;padding-left:3px;letter-spacing:0.280px;">Chukotskij ...</div><div class="c" style="left:331px;width:71px;padding-left:3px;letter-spacing:0.280px;">Chukotskij ...</div></div>
<div class="row" style="top:275px;background:#ededed;"><div class="c" style="left:0;width:27px;padding-left:3px;background:linear-gradient(#f7f6f5,#e9e8e6);border-color:#cfcdc9;">17</div><div class="c r" style="left:31px;width:72px;padding-right:2px;">187639000</div><div class="c r" style="left:106px;width:72px;padding-right:2px;">63423.2</div><div class="c" style="left:181px;width:72px;padding-left:2px;font-family:DejaVu Sans,sans-serif;font-size:10.300px;letter-spacing:0.650px;color:#111;">�����...</div><div class="c" style="left:256px;width:71px;padding-left:3px;letter-spacing:0.280px;">Arhangel's...</div><div class="c" style="left:331px;width:71px;padding-left:3px;letter-spacing:0.280px;">Arhangel's...</div></div>
<div class="row" style="top:290px;background:#fff;"><div class="c" style="left:0;width:27px;padding-left:3px;background:linear-gradient(#f7f6f5,#e9e8e6);border-color:#cfcdc9;">18</div><div class="c r" style="left:31px;width:72px;padding-right:2px;">2224330</div><div class="c r" style="left:106px;width:72px;padding-right:2px;">7318.83</div><div class="c" style="left:181px;width:72px;padding-left:2px;font-family:DejaVu Sans,sans-serif;font-size:10.300px;letter-spacing:0.650px;color:#111;">�����...</div><div class="c" style="left:256px;width:71px;padding-left:3px;letter-spacing:0.280px;">Arhangel's...</div><div class="c" style="left:331px;width:71px;padding-left:3px;letter-spacing:0.280px;">Arhangel's...</div></div>
<div class="row" style="top:305px;background:#ededed;"><div class="c" style="left:0;width:27px;padding-left:3px;background:linear-gradient(#f7f6f5,#e9e8e6);border-color:#cfcdc9;">19</div><div class="c r" style="left:31px;width:72px;padding-right:2px;">43893000</div><div class="c r" style="left:106px;width:72px;padding-right:2px;">26636.7</div><div class="c" style="left:181px;width:72px;padding-left:2px;font-family:DejaVu Sans,sans-serif;font-size:10.300px;letter-spacing:0.650px;color:#111;">�����...</div><div class="c" style="left:256px;width:71px;padding-left:3px;letter-spacing:0.280px;">Arhangel's...</div><div class="c" style="left:331px;width:71px;padding-left:3px;letter-spacing:0.280px;">Arhangel's...</div></div>
<div class="row" style="top:320px;background:#fff;"><div class="c" style="left:0;width:27px;padding-left:3px;background:linear-gradient(#f7f6f5,#e9e8e6);border-color:#cfcdc9;">20</div><div class="c r" style="left:31px;width:72px;padding-right:2px;">10459700</div><div class="c r" style="left:106px;width:72px;padding-right:2px;">23340.5</div><div class="c" style="left:181px;width:72px;padding-left:2px;font-family:DejaVu Sans,sans-serif;font-size:10.300px;letter-spacing:0.650px;color:#111;">�����...</div><div class="c" style="left:256px;width:71px;padding-left:3px;letter-spacing:0.280px;">Arhangel's...</div><div class="c" style="left:331px;width:71px;padding-left:3px;letter-spacing:0.280px;">Arhangel's...</div></div>
<div class="row" style="top:335px;background:#ededed;"><div class="c" style="left:0;width:27px;padding-left:3px;background:linear-gradient(#f7f6f5,#e9e8e6);border-color:#cfcdc9;">21</div><div class="c r" style="left:31px;width:72px;padding-right:2px;">3286350</div><div class="c r" style="left:106px;width:72px;padding-right:2px;">16641</div><div class="c" style="left:181px;width:72px;padding-left:2px;font-family:DejaVu Sans,sans-serif;font-size:10.300px;letter-spacing:0.650px;color:#111;">�����...</div><div class="c" style="left:256px;width:71px;padding-left:3px;letter-spacing:0.280px;">Chukotskij ...</div><div class="c" style="left:331px;width:71px;padding-left:3px;letter-spacing:0.280px;">Chukotskij ...</div></div>
<div class="row" style="top:350px;background:#fff;"><div class="c" style="left:0;width:27px;padding-left:3px;background:linear-gradient(#f7f6f5,#e9e8e6);border-color:#cfcdc9;">22</div><div class="c r" style="left:31px;width:72px;padding-right:2px;">4424640</div><div class="c r" style="left:106px;width:72px;padding-right:2px;">19236.8</div><div class="c" style="left:181px;width:72px;padding-left:2px;font-family:DejaVu Sans,sans-serif;font-size:10.300px;letter-spacing:0.650px;color:#111;">�����...</div><div class="c" style="left:256px;width:71px;padding-left:3px;letter-spacing:0.280px;">Chukotskij ...</div><div class="c" style="left:331px;width:71px;padding-left:3px;letter-spacing:0.280px;">Chukotskij ...</div></div>
<div class="row" style="top:365px;background:#ededed;"><div class="c" style="left:0;width:27px;padding-left:3px;background:linear-gradient(#f7f6f5,#e9e8e6);border-color:#cfcdc9;">23</div><div class="c r" style="left:31px;width:72px;padding-right:2px;">982169</div><div class="c r" style="left:106px;width:72px;padding-right:2px;">4301.44</div><div class="c" style="left:181px;width:72px;padding-left:2px;font-family:DejaVu Sans,sans-serif;font-size:10.300px;letter-spacing:0.650px;color:#111;">�����...</div><div class="c" style="left:256px;width:71px;padding-left:3px;letter-spacing:0.280px;">Chukotskij ...</div><div class="c" style="left:331px;width:71px;padding-left:3px;letter-spacing:0.280px;">Chukotskij ...</div></div>
<div class="row" style="top:380px;background:#fff;"><div class="c" style="left:0;width:27px;padding-left:3px;background:linear-gradient(#f7f6f5,#e9e8e6);border-color:#cfcdc9;">24</div><div class="c r" style="left:31px;width:72px;padding-right:2px;">4913600</div><div class="c r" style="left:106px;width:72px;padding-right:2px;">11342.2</div><div class="c" style="left:181px;width:72px;padding-left:2px;font-family:DejaVu Sans,sans-serif;font-size:10.300px;letter-spacing:0.650px;color:#111;">�����...</div><div class="c" style="left:256px;width:71px;padding-left:3px;letter-spacing:0.280px;">Chukotskij ...</div><div class="c" style="left:331px;width:71px;padding-left:3px;letter-spacing:0.280px;">Chukotskij ...</div></div>
<div class="row" style="top:395px;background:#ededed;"><div class="c" style="left:0;width:27px;padding-left:3px;background:linear-gradient(#f7f6f5,#e9e8e6);border-color:#cfcdc9;">25</div><div class="c r" style="left:31px;width:72px;padding-right:2px;">4015720</div><div class="c r" style="left:106px;width:72px;padding-right:2px;">15359</div><div class="c" style="left:181px;width:72px;padding-left:2px;font-family:DejaVu Sans,sans-serif;font-size:10.300px;letter-spacing:0.650px;color:#111;">�����...</div><div class="c" style="left:256px;width:71px;padding-left:3px;letter-spacing:0.280px;">Chukotskij ...</div><div class="c" style="left:331px;width:71px;padding-left:3px;letter-spacing:0.280px;">Chukotskij ...</div></div>
<div class="row" style="top:410px;background:#fff;"><div class="c" style="left:0;width:27px;padding-left:3px;background:linear-gradient(#f7f6f5,#e9e8e6);border-color:#cfcdc9;">26</div><div class="c r" style="left:31px;width:72px;padding-right:2px;">2831130</div><div class="c r" style="left:106px;width:72px;padding-right:2px;">9253.22</div><div class="c" style="left:181px;width:72px;padding-left:2px;font-family:DejaVu Sans,sans-serif;font-size:10.300px;letter-spacing:0.650px;color:#111;">�����...</div><div class="c" style="left:256px;width:71px;padding-left:3px;letter-spacing:0.280px;">Chukotskij ...</div><div class="c" style="left:331px;width:71px;padding-left:3px;letter-spacing:0.280px;">Chukotskij ...</div></div>
<div class="row" style="top:425px;background:#ededed;"><div class="c" style="left:0;width:27px;padding-left:3px;background:linear-gradient(#f7f6f5,#e9e8e6);border-color:#cfcdc9;">27</div><div class="c r" style="left:31px;width:72px;padding-right:2px;">2066780</div><div class="c r" style="left:106px;width:72px;padding-right:2px;">7127.92</div><div class="c" style="left:181px;width:72px;padding-left:2px;font-family:DejaVu Sans,sans-serif;font-size:10.300px;letter-spacing:0.650px;color:#111;">�����...</div><div class="c" style="left:256px;width:71px;padding-left:3px;letter-spacing:0.280px;">Arhangel's...</div><div class="c" style="left:331px;width:71px;padding-left:3px;letter-spacing:0.280px;">Arhangel's...</div></div>
<div class="a" style="left:31px;top:20px;width:74px;height:14px;border:1.500px solid #19e07a;box-sizing:border-box;"></div>
</div>
<div class="a" style="left:0;top:459px;width:814px;height:1px;background:#b9b6b1;"></div>
<div class="a" style="left:815px;top:22px;width:9px;height:438px;border-radius:5px;background:linear-gradient(90deg,#cfcdc9,#e4e3e1 60%,#d6d4d1);border:1px solid #b5b2ad;box-sizing:border-box;"></div>
<div class="a" style="left:815px;top:22px;width:9px;height:12px;border-radius:5px 5px 0 0;background:#f4f3f2;border:1px solid #b5b2ad;box-sizing:border-box;"></div>
<svg class="ic" style="left:817.500px;top:26px" width="4" height="3" viewBox="0 0 4 3"><path d="M0 3L2 0 4 3z" fill="#aaa"/></svg>
<div class="a" style="left:815px;top:31px;width:9px;height:26px;border-radius:5px;background:linear-gradient(90deg,#fbfbfa,#eceae8);border:1px solid #a9a6a1;box-sizing:border-box;"></div>
<div class="a" style="left:818px;top:41px;width:3px;height:5px;background:repeating-linear-gradient(#a9a6a1 0,#a9a6a1 1px,transparent 1px,transparent 2px);"></div>
<div class="a" style="left:815px;top:448px;width:9px;height:12px;border-radius:0 0 5px 5px;background:#f4f3f2;border:1px solid #b5b2ad;box-sizing:border-box;"></div>
<svg class="ic" style="left:817.500px;top:453px" width="4" height="3" viewBox="0 0 4 3"><path d="M0 0L2 3 4 0z" fill="#444"/></svg>
<svg width="0" height="0" style="position:absolute"><defs><linearGradient id="tbl" x1="0" y1="0" x2="1" y2="0"><stop offset="0" stop-color="#0a2ab8"/><stop offset="1" stop-color="#4a90f4"/></linearGradient><linearGradient id="tbg" x1="0" y1="0" x2="1" y2="0"><stop offset="0" stop-color="#8a8a8a"/><stop offset="1" stop-color="#bcbcbc"/></linearGradient></defs></svg>
<div class="tb" style="left:3.00px;top:465px;"><svg class="ic" style="left:0;top:0" width="15" height="16" viewBox="0 0 15 16"><rect x="1.200" y="2.200" width="12.600" height="11.600" fill="#fff"/><rect x="1.200" y="2.200" width="12.600" height="2.600" fill="url(#tbl)"/><path d="M1.400 2.200v11.600" stroke="#3a66e0" stroke-width="0.700"/><path d="M1.200 13.400h12.600M13.500 2.500v11" stroke="#0a1030" stroke-width="1.100" fill="none"/><path d="M3 6.800h2.500M6.500 6.800h5.500M3 9h2.500M6.500 9h5.500M3 11.200h2.500M6.500 11.200h5.500" stroke="#c4c8cc" stroke-width="1"/></svg></div>
<div class="tb" style="left:26.00px;top:465px;"><svg class="ic" style="left:0;top:0" width="15" height="16" viewBox="0 0 15 16"><rect x="1.200" y="2.200" width="12.600" height="11.600" fill="#fff"/><rect x="1.200" y="2.200" width="12.600" height="2.600" fill="url(#tbl)"/><path d="M1.400 2.200v11.600M13.600 2.200v11.600M1.200 13.600h12.600" stroke="#3a66e0" stroke-width="0.700" fill="none"/><path d="M3 6.500h2.500M6.500 6.500h5" stroke="#f04848" stroke-width="1.200"/><path d="M3 8.800h2.500M3 11h2.500" stroke="#c0c4cc" stroke-width="1"/><circle cx="10" cy="10.300" r="3.300" fill="#3a70e0"/><path d="M10 12.300v-3M8.400 9.300h3.200l-1.600 1.700z" stroke="#e8f0ff" stroke-width="0.900" fill="#e8f0ff"/></svg></div>
<div class="tb" style="left:48.00px;top:465px;"><svg class="ic" style="left:0;top:0" width="15" height="16" viewBox="0 0 15 16"><rect x="1.200" y="2.200" width="12.600" height="11.600" fill="#fff"/><rect x="1.200" y="2.200" width="12.600" height="2.600" fill="url(#tbl)"/><path d="M1.400 2.200v11.600M13.600 2.200v11.600M1.200 13.600h12.600" stroke="#3a66e0" stroke-width="0.700" fill="none"/><path d="M3 6.500h2.500M6.500 6.500h4.500M3 8.600h2.500M6.500 8.600h4.500" stroke="#f04848" stroke-width="1.300"/><path d="M7 11.200h5" stroke="#c0c4cc" stroke-width="1"/><path d="M2 10.500c1 2.500 3 3 5 1.500l-1.500-.2M11 4.500l1.800-1.500M12.800 3v1.800M12.800 3h-1.800" stroke="#2a60e0" stroke-width="1.200" fill="none"/><path d="M1.500 11l2 2.500 1.500-2z" fill="#2a60e0"/></svg></div>
<div class="tb" style="left:71.00px;top:465px;"><svg class="ic" style="left:0;top:0" width="15" height="16" viewBox="0 0 15 16"><rect x="1.200" y="2.200" width="12.600" height="11.600" fill="#fff"/><rect x="1.200" y="2.200" width="12.600" height="2.600" fill="url(#tbl)"/><path d="M1.400 2.200v11.600M13.600 2.200v11.600M1.200 13.600h12.600" stroke="#3a66e0" stroke-width="0.700" fill="none"/><path d="M3 6.800h2.500M3 9h2.500M3 11.200h2.500" stroke="#c0c4cc" stroke-width="1"/><path d="M5.800 6.200l3.800-1 2 7.300-3.800 1z" fill="#f4f0a8"/><path d="M8 6.200h3l1.800 1.800v5.800H8z" fill="#b0dcf0"/></svg></div>
<div class="tb" style="left:93.00px;top:465px;"><svg class="ic" style="left:0;top:0" width="15" height="16" viewBox="0 0 15 16"><path d="M2.500 5.500l2-3 7 .5 1.500 4-1.500 5.500-8 .5-1.500-3z" fill="#f8f828"/><circle cx="5.800" cy="5.800" r="4" fill="#e4f0f0" fill-opacity="0.900" stroke="#8a9498" stroke-width="1.300"/><path d="M4 4.500a2.500 2.500 0 0 1 3-1" stroke="#fff" stroke-width="1" fill="none"/><path d="M8.800 9l1.200 1.400" stroke="#777" stroke-width="1.500"/><path d="M10.300 10.800l2.700 3" stroke="#e8982a" stroke-width="2.600" stroke-linecap="round"/></svg></div>
<div class="tb" style="left:116.00px;top:465px;"><svg class="ic" style="left:0;top:0" width="15" height="16" viewBox="0 0 15 16"><rect x="0.800" y="1.500" width="7" height="5" fill="#f8e028"/><path d="M1.500 2l4 3.500M1.500 2v2.500M1.500 2h2.500" stroke="#f0c010" stroke-width="1"/><g fill="#6a8cae" stroke="#4a6a8c" stroke-width="0.500"><path d="M7 1.500l2.300 2.300L7 6.100 4.700 3.800z"/><path d="M3.500 6l2.300 2.300-2.300 2.300-2.300-2.300z"/><path d="M10.700 5.700L13 8l-2.300 2.300L8.400 8z"/><path d="M7 9.800l2.300 2.300L7 14.400l-2.300-2.300z"/></g></svg></div>
<div class="tb" style="left:138.50px;top:465px;"><svg class="ic" style="left:0;top:0" width="15" height="16" viewBox="0 0 15 16"><path d="M4.500 9.500L11.500 3.500" stroke="#2f8ae0" stroke-width="3.200" stroke-linecap="round"/><path d="M2.600 11.300l1.200-2.300 1.700 1.700z" fill="#1a5aa8"/><path d="M4 14l7.500-1.200" stroke="#c0c0c0" stroke-width="1.100"/></svg></div>
<div class="tbd" style="left:161.00px;top:465px;"><svg class="ic" style="left:0;top:0" width="15" height="16" viewBox="0 0 15 16"><rect x="2.800" y="3" width="10" height="10.500" rx="1" fill="#bdbdbd"/><rect x="4.500" y="3" width="6.500" height="3.500" fill="#f0f0f0"/><rect x="3.800" y="8.500" width="8" height="4.500" fill="#dcdcdc"/><path d="M12.300 4v9" stroke="#a8a8a8" stroke-width="0.900"/></svg></div>
<div class="tbd" style="left:183.50px;top:465px;"><svg class="ic" style="left:0;top:0" width="15" height="16" viewBox="0 0 15 16"><circle cx="7.500" cy="8" r="5.200" fill="#e9e9e9"/><circle cx="7.500" cy="8" r="3.900" fill="#666"/><path d="M6 6.500l3 3M9 6.500l-3 3" stroke="#f4f4f4" stroke-width="1.300"/></svg></div>
<div class="tbd" style="left:206.00px;top:465px;"><svg class="ic" style="left:0;top:0" width="15" height="16" viewBox="0 0 15 16"><rect x="1.500" y="2.500" width="12" height="11" fill="#f8f8f8" stroke="#c4c4c4" stroke-width="0.700"/><rect x="1.500" y="2.500" width="12" height="2" fill="url(#tbg)"/><path d="M3 7h2.500M6.500 7h5M3 9.200h2.500M6.500 9.200h5M3 11.400h2.500M6.500 11.400h3" stroke="#c8c8c8" stroke-width="1"/><path d="M10.500 9.500l3 2.500-3 2.500z" fill="#e0e0e0" stroke="#bbb" stroke-width="0.500"/></svg></div>
<div class="tbd" style="left:229.00px;top:465px;"><svg class="ic" style="left:0;top:0" width="15" height="16" viewBox="0 0 15 16"><rect x="1.500" y="2.500" width="12" height="11" fill="#f8f8f8" stroke="#c4c4c4" stroke-width="0.700"/><rect x="1.500" y="2.500" width="12" height="2" fill="url(#tbg)"/><path d="M3 7h2.500M3 9.200h2.500M3 11.400h2.500" stroke="#c8c8c8" stroke-width="1"/><rect x="7.300" y="7" width="5.500" height="6" fill="#e4e4e4" stroke="#b4b4b4" stroke-width="0.700"/><path d="M8.300 8.500l3.500 3.500M11.800 8.500l-3.500 3.500" stroke="#f8f8f8" stroke-width="1.200"/></svg></div>
<div class="tbd" style="left:251.50px;top:465px;"><svg class="ic" style="left:0;top:0" width="15" height="16" viewBox="0 0 15 16"><rect x="3.800" y="2" width="8" height="12.500" fill="#c8c8c8"/><rect x="4.300" y="2.500" width="7" height="2.200" fill="#999"/><path d="M4.300 6.300h7M4.300 8.500h7M4.300 10.700h7M4.300 12.900h7" stroke="#a4a4a4" stroke-width="1.300" stroke-dasharray="1.900 0.650"/></svg></div>
<div class="t u" style="left:273px;top:467px;">Искать</div>
<div class="a" style="left:315px;top:465px;width:316px;height:19px;border:1px solid #aaa7a2;border-radius:3px;background:#fff;box-sizing:border-box;box-shadow:inset 0 1px 1px #ddd;"></div>
<div class="t u" style="left:636px;top:467px;letter-spacing:0;">в поле</div>
<div class="btn" style="left:675px;top:465px;width:79px;height:19px;line-height:17px;text-align:left;padding-left:4px;background:linear-gradient(#e9e8e6,#cfcecb);">AREA<svg class="ic" style="right:4px;top:4px" width="5" height="10" viewBox="0 0 5 10"><path d="M0 3.500L2.500 0.500 5 3.500zM0 6.500L2.500 9.500 5 6.500z" fill="#666"/></svg></div>
<div class="btn" style="left:759px;top:465px;width:63px;height:19px;line-height:17px;background:linear-gradient(#f5a682,#ee8a60);border-color:#c9714a;"><u>П</u>оиск</div>
<div class="a" style="left:5px;top:493px;width:11px;height:11px;border:1px solid #b0ada8;border-radius:2px;background:#fff;box-sizing:border-box;"></div><div class="t u" style="left:22px;top:491.700px;">Только выделенные записи</div>
<div class="a" style="left:177px;top:493px;width:11px;height:11px;border:1px solid #b0ada8;border-radius:2px;background:#fff;box-sizing:border-box;"></div><div class="t u" style="left:194px;top:491.700px;">Искать среди выбранных</div>
<svg class="ic" style="left:339px;top:491px" width="13" height="12" viewBox="0 0 13 12"><rect x="0.5" y="1.500" width="10" height="10" rx="1.800" fill="#f07f4e" stroke="#c8592b" stroke-width="1"/><path d="M2.600 6.300l2.400 2.800L11.300 1" fill="none" stroke="#5a2410" stroke-width="1.700"/></svg>
<div class="t u" style="left:356px;top:491.700px;">Учитывать регистр</div>
<div class="btn" style="left:565px;top:490px;width:121px;height:19px;line-height:17px;">Расширенный поиск</div>
<div class="btn" style="left:691px;top:490px;width:63px;height:19px;line-height:17px;">Справка</div>
<div class="btn" style="left:759px;top:490px;width:63px;height:19px;line-height:17px;">Закрыть</div>
</div>
</div>
</body></html>
